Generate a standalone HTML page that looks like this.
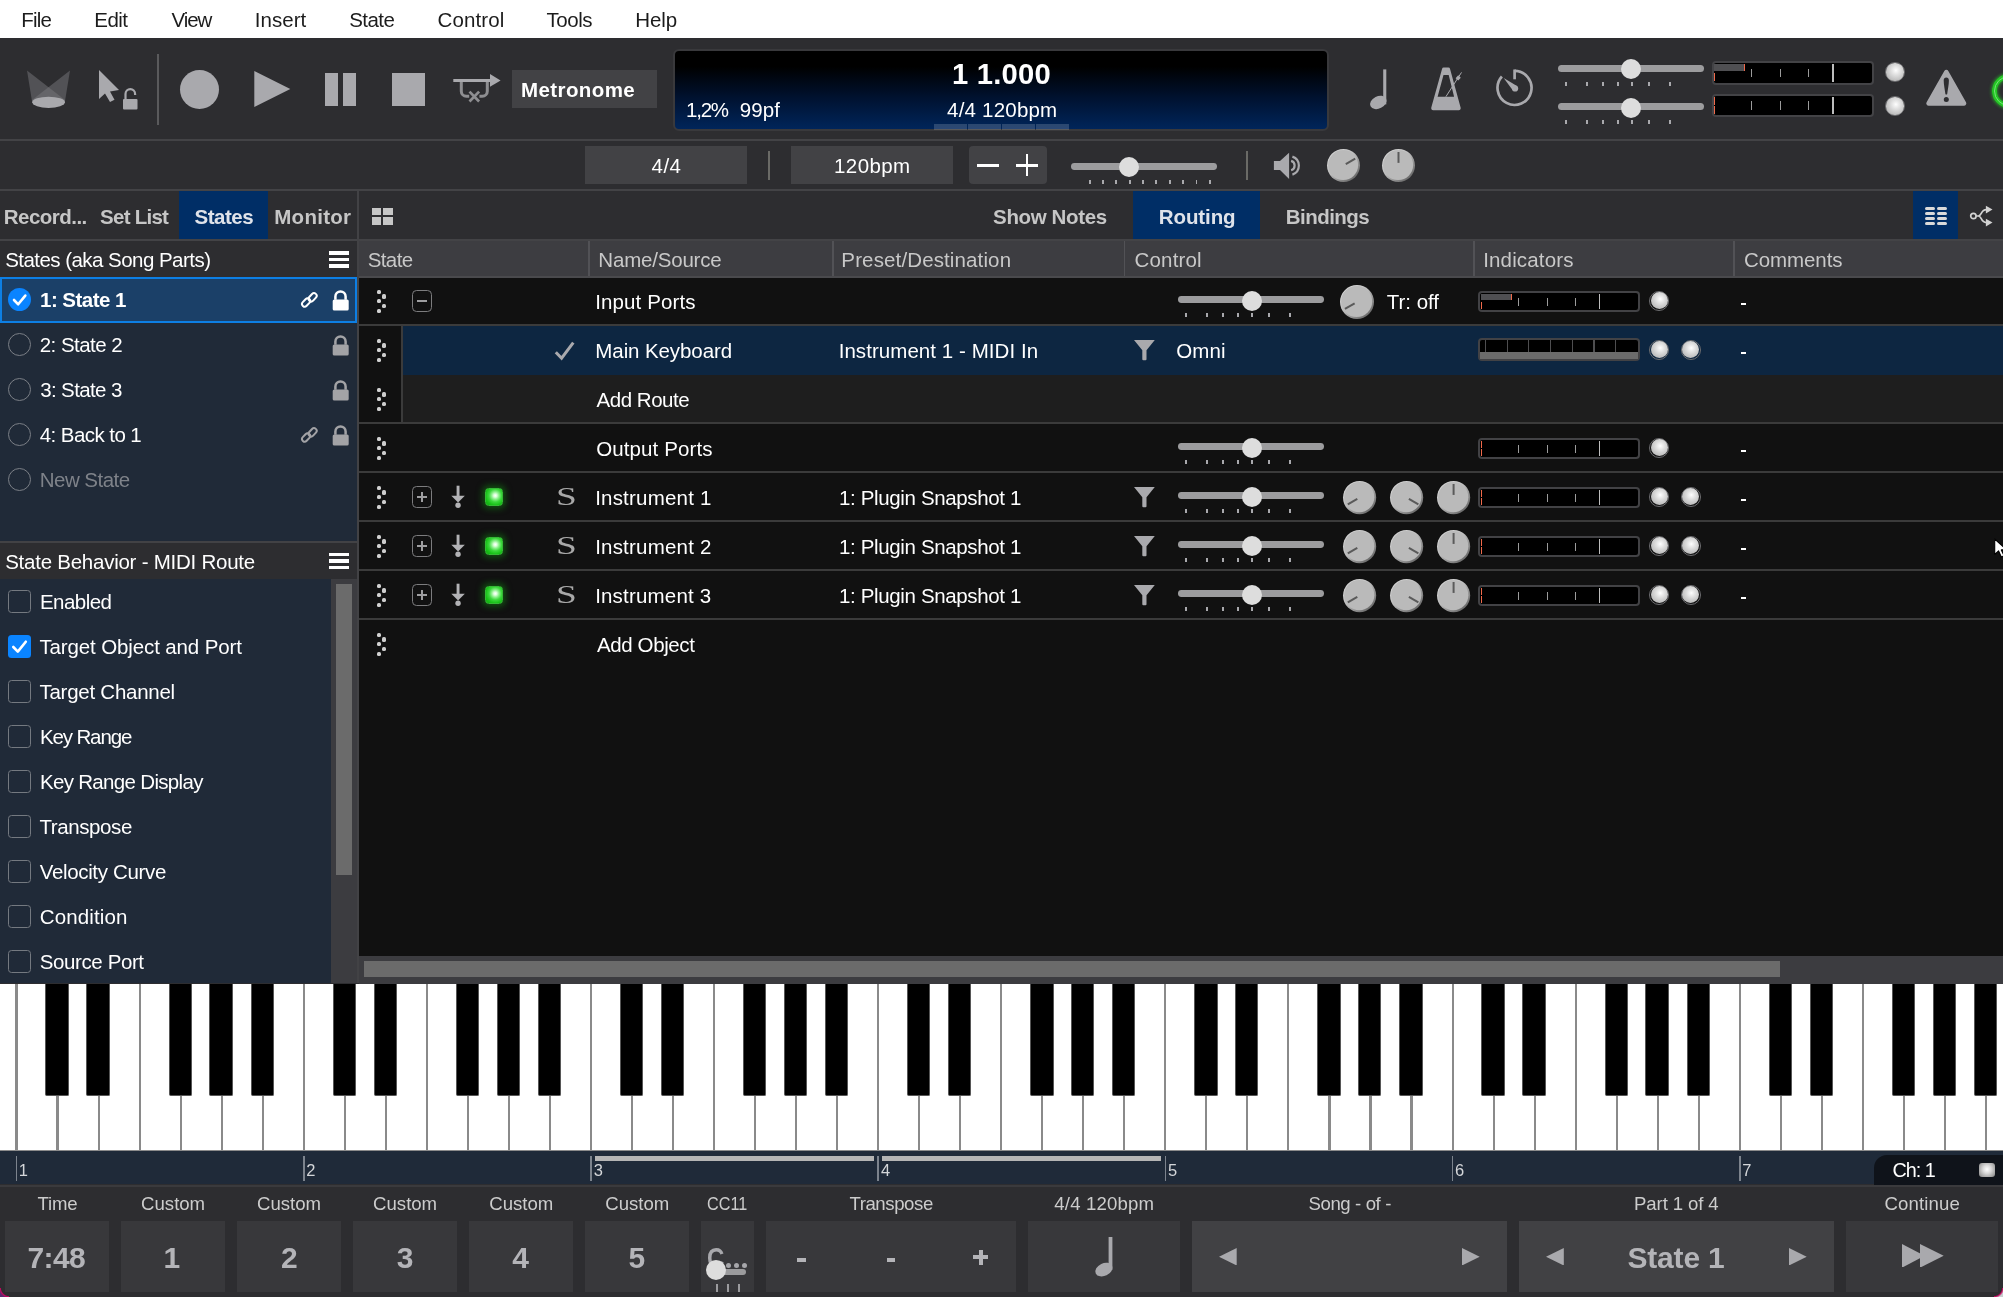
<!DOCTYPE html>
<html><head><meta charset="utf-8"><title>UI</title>
<style>
html,body{margin:0;padding:0;}
body{width:2003px;height:1297px;overflow:hidden;background:#2d2d30;position:relative;font-family:"Liberation Sans",sans-serif;}
#r{position:absolute;left:0;top:0;width:2003px;height:1297px;overflow:hidden;will-change:transform;}
#r div,#r span,#r svg{position:absolute;display:block;}
#r span{white-space:nowrap;}
</style></head><body><div id="r">
<div style="left:0px;top:0px;width:2003px;height:38px;background:#ffffff;"></div>
<span style="left:21.36px;top:9.57px;font-size:20.5px;line-height:20.5px;color:#1c1c1c;letter-spacing:-0.850px;">File</span>
<span style="left:94.36px;top:9.57px;font-size:20.5px;line-height:20.5px;color:#1c1c1c;letter-spacing:-0.610px;">Edit</span>
<span style="left:171.50px;top:9.57px;font-size:20.5px;line-height:20.5px;color:#1c1c1c;letter-spacing:-1.075px;">View</span>
<span style="left:254.66px;top:9.57px;font-size:20.5px;line-height:20.5px;color:#1c1c1c;letter-spacing:0.066px;">Insert</span>
<span style="left:349.18px;top:9.57px;font-size:20.5px;line-height:20.5px;color:#1c1c1c;letter-spacing:-0.526px;">State</span>
<span style="left:437.48px;top:9.57px;font-size:20.5px;line-height:20.5px;color:#1c1c1c;letter-spacing:0.119px;">Control</span>
<span style="left:546.59px;top:9.57px;font-size:20.5px;line-height:20.5px;color:#1c1c1c;letter-spacing:-0.483px;">Tools</span>
<span style="left:635.36px;top:9.57px;font-size:20.5px;line-height:20.5px;color:#1c1c1c;letter-spacing:-0.160px;">Help</span>
<div style="left:0px;top:38px;width:2003px;height:101px;background:#2d2d30;"></div>
<div style="left:0px;top:139px;width:2003px;height:2px;background:#434346;"></div>
<div style="left:0px;top:141px;width:2003px;height:48px;background:#2d2d30;"></div>
<div style="left:0px;top:189px;width:2003px;height:2px;background:#434346;"></div>
<div style="left:0px;top:191px;width:2003px;height:48px;background:#2d2d30;"></div>
<div style="left:0px;top:239px;width:2003px;height:2px;background:#434346;"></div>
<svg style="left:24px;top:66px;" width="50" height="46" viewBox="0 0 50 46"><polygon points="3,4.5 41,34 41,37 8.3,37" fill="#77777b" opacity="0.5"/><polygon points="46,4.5 8,34 8,37 40.7,37" fill="#77777b" opacity="0.5"/><ellipse cx="24.6" cy="36.3" rx="16.3" ry="5.6" fill="#a9a9ad"/></svg>
<svg style="left:96px;top:66px;" width="46" height="48" viewBox="0 0 46 48"><polygon points="3,4 3,33 9,27.5 14,36 18.5,33.8 14,25.5 23,24" fill="#a9a9ad"/><rect x="27" y="33" width="14.5" height="10.5" rx="1" fill="#a9a9ad"/><path d="M29.5 33 v-5 a4.8 4.8 0 0 1 9.6 0 v1" fill="none" stroke="#a9a9ad" stroke-width="2.2"/></svg>
<div style="left:157px;top:54px;width:2px;height:71px;background:#5a5a5c;"></div>
<div style="left:179.5px;top:69.5px;width:39px;height:39px;background:#a9a9ad;border-radius:50%"></div>
<svg style="left:250px;top:68px;" width="44" height="42" viewBox="0 0 44 42"><polygon points="4.3,3 40.3,21 4.3,39" fill="#a9a9ad"/></svg>
<div style="left:325px;top:73px;width:13px;height:33px;background:#a9a9ad;"></div>
<div style="left:343px;top:73px;width:13px;height:33px;background:#a9a9ad;"></div>
<div style="left:392px;top:73px;width:33px;height:33px;background:#a9a9ad;"></div>
<svg style="left:450px;top:70px;" width="54" height="36" viewBox="0 0 54 36"><path d="M11.3 11 V21.2 a5 5 0 0 0 5 5 H19.2 M37.3 11 V21.2 a5 5 0 0 1 -5 5 H29.4" stroke="#8e8e91" stroke-width="3" fill="none"/><path d="M19.5 21.6 L29.1 31.5 M29.1 21.6 L19.5 31.5" stroke="#8e8e91" stroke-width="2.7" fill="none"/><path d="M3.3 10.4 H41" stroke="#a9a9ad" stroke-width="3" fill="none"/><polygon points="40,4.1 50.6,10.4 40,16.7" fill="#a9a9ad"/></svg>
<div style="left:512px;top:70px;width:145px;height:38px;background:#424245;"></div>
<span style="left:521.07px;top:79.78px;font-size:20.5px;line-height:20.5px;color:#ffffff;font-weight:bold;letter-spacing:0.399px;">Metronome</span>
<div style="left:673px;top:48.8px;width:656px;height:82px;background:linear-gradient(#000 0%,#000 20%,#001230 60%,#00255a 100%);border:2.6px solid #39393c;border-radius:6px;box-sizing:border-box;"></div>
<span style="left:952.00px;top:60.08px;font-size:29.2px;line-height:29.2px;color:#fff;font-weight:bold;letter-spacing:0.214px;">1 1.000</span>
<span style="left:686.07px;top:99.58px;font-size:20.5px;line-height:20.5px;color:#fff;letter-spacing:-1.264px;">1,2%</span>
<span style="left:739.68px;top:99.58px;font-size:20.5px;line-height:20.5px;color:#fff;letter-spacing:0.092px;">99pf</span>
<span style="left:947.09px;top:99.58px;font-size:20.5px;line-height:20.5px;color:#fff;letter-spacing:0.203px;">4/4 120bpm</span>
<div style="left:934px;top:124px;width:33px;height:6px;background:rgba(255,255,255,0.17);"></div>
<div style="left:968px;top:124px;width:33px;height:6px;background:rgba(255,255,255,0.17);"></div>
<div style="left:1002px;top:124px;width:33px;height:6px;background:rgba(255,255,255,0.17);"></div>
<div style="left:1036px;top:124px;width:33px;height:6px;background:rgba(255,255,255,0.17);"></div>
<div style="left:585px;top:146px;width:162px;height:38px;background:#424245;"></div>
<span style="left:651.59px;top:155.88px;font-size:20.5px;line-height:20.5px;color:#fff;letter-spacing:0.424px;">4/4</span>
<div style="left:768.2px;top:151.3px;width:1.8px;height:28.5px;background:#6a6a66;"></div>
<div style="left:791px;top:146px;width:162px;height:38px;background:#424245;"></div>
<span style="left:834.07px;top:155.88px;font-size:20.5px;line-height:20.5px;color:#fff;letter-spacing:0.409px;">120bpm</span>
<div style="left:969px;top:146px;width:78px;height:38px;background:#424245;border-radius:4px"></div>
<div style="left:977px;top:163.8px;width:22px;height:2.8px;background:#fff;"></div>
<div style="left:1016px;top:163.8px;width:22px;height:2.8px;background:#fff;"></div>
<div style="left:1025.6px;top:154px;width:2.8px;height:22px;background:#fff;"></div>
<svg style="left:1366px;top:64px;" width="26" height="50" viewBox="0 0 26 50"><rect x="17.2" y="5.4" width="3.1" height="35" fill="#a9a9ad"/><ellipse cx="12.3" cy="38.4" rx="8.7" ry="6.1" transform="rotate(-27 12.3 38.4)" fill="#a9a9ad"/></svg>
<svg style="left:1426px;top:64px;" width="40" height="50" viewBox="0 0 40 50"><path d="M17.6 3.5 h4.9 a1.6 1.6 0 0 1 1.5 1.2 L34.6 43.6 a2 2 0 0 1 -1.9 2.6 H7.2 a2 2 0 0 1 -1.9 -2.6 L16.1 4.700 a1.6 1.6 0 0 1 1.5 -1.2 z M17.5 11.1 L11.6 32.700 H28.100 L22.7 11.1 z" fill="#a9a9ad" fill-rule="evenodd"/><path d="M19.9 32.7 L35.5 8.4" stroke="#a9a9ad" stroke-width="1"/><polygon points="32.200,11.3 34.8,13.7 32.200,16.6 29.6,14.2" fill="#a9a9ad"/></svg>
<svg style="left:1492px;top:66px;" width="46" height="46" viewBox="0 0 46 46"><path d="M22.6 4.9 A17 17 0 1 1 9.9 10.500" fill="none" stroke="#a9a9ad" stroke-width="2.7"/><path d="M22.6 3.5 V13.3" stroke="#a9a9ad" stroke-width="2.7"/><path d="M11.7 11.900 L25.4 20.3 L20.9 24.6 z" fill="#a9a9ad"/><circle cx="23.1" cy="22.5" r="3.1" fill="#a9a9ad"/></svg>
<div style="left:1558px;top:65.1px;width:146px;height:7px;background:#9c9c9e;border-radius:3.5px"></div>
<div style="left:1565.2px;top:82px;width:1.6px;height:4.4px;background:#a9a9ad;"></div>
<div style="left:1586.2px;top:82px;width:1.6px;height:4.4px;background:#a9a9ad;"></div>
<div style="left:1602.2px;top:82px;width:1.6px;height:4.4px;background:#a9a9ad;"></div>
<div style="left:1617.2px;top:82px;width:1.6px;height:4.4px;background:#a9a9ad;"></div>
<div style="left:1631.2px;top:82px;width:1.6px;height:4.4px;background:#a9a9ad;"></div>
<div style="left:1648.2px;top:82px;width:1.6px;height:4.4px;background:#a9a9ad;"></div>
<div style="left:1669.2px;top:82px;width:1.6px;height:4.4px;background:#a9a9ad;"></div>
<div style="left:1620.7px;top:59.04999999999999px;width:20.2px;height:20.2px;background:#dddddd;border-radius:50%"></div>
<div style="left:1558px;top:103.2px;width:146px;height:7px;background:#9c9c9e;border-radius:3.5px"></div>
<div style="left:1565.2px;top:120px;width:1.6px;height:4.4px;background:#a9a9ad;"></div>
<div style="left:1586.2px;top:120px;width:1.6px;height:4.4px;background:#a9a9ad;"></div>
<div style="left:1602.2px;top:120px;width:1.6px;height:4.4px;background:#a9a9ad;"></div>
<div style="left:1617.2px;top:120px;width:1.6px;height:4.4px;background:#a9a9ad;"></div>
<div style="left:1631.2px;top:120px;width:1.6px;height:4.4px;background:#a9a9ad;"></div>
<div style="left:1648.2px;top:120px;width:1.6px;height:4.4px;background:#a9a9ad;"></div>
<div style="left:1669.2px;top:120px;width:1.6px;height:4.4px;background:#a9a9ad;"></div>
<div style="left:1620.7px;top:97.50000000000001px;width:20.2px;height:20.2px;background:#dddddd;border-radius:50%"></div>
<div style="left:1711.7px;top:61px;width:162px;height:23.5px;background:#000;border:2px solid #434346;border-radius:4px;box-sizing:border-box;"></div>
<div style="left:1751.2px;top:68.99px;width:1.2px;height:8.459999999999999px;background:#9c9c9c;"></div>
<div style="left:1780.2px;top:68.99px;width:1.2px;height:8.459999999999999px;background:#9c9c9c;"></div>
<div style="left:1808.2px;top:68.99px;width:1.2px;height:8.459999999999999px;background:#9c9c9c;"></div>
<div style="left:1832.2px;top:64px;width:1.4px;height:17.5px;background:#bdbdbd;"></div>
<div style="left:1714.4px;top:64px;width:30px;height:7.35px;background:#4f4f52;"></div>
<div style="left:1744.0px;top:64px;width:1.1px;height:7.35px;background:#f0694a;"></div>
<div style="left:1714.4px;top:73.45px;width:1.1px;height:8.05px;background:#f0694a;"></div>
<div style="left:1711.7px;top:93.5px;width:162px;height:23.5px;background:#000;border:2px solid #434346;border-radius:4px;box-sizing:border-box;"></div>
<div style="left:1751.2px;top:101.49px;width:1.2px;height:8.459999999999999px;background:#9c9c9c;"></div>
<div style="left:1780.2px;top:101.49px;width:1.2px;height:8.459999999999999px;background:#9c9c9c;"></div>
<div style="left:1808.2px;top:101.49px;width:1.2px;height:8.459999999999999px;background:#9c9c9c;"></div>
<div style="left:1832.2px;top:96.5px;width:1.4px;height:17.5px;background:#bdbdbd;"></div>
<div style="left:1714.4px;top:96.5px;width:1.1px;height:8.05px;background:#f0694a;"></div>
<div style="left:1714.4px;top:105.95px;width:1.1px;height:8.05px;background:#f0694a;"></div>
<div style="left:1884.8px;top:61.8px;width:20.4px;height:20.4px;background:transparent;border-radius:50%;border:1.2px solid #6e6e71;box-sizing:border-box;"></div>
<div style="left:1886.45px;top:63.45px;width:17.1px;height:17.1px;background:radial-gradient(circle at 55% 41%,#ffffff 0%,#f4f4f4 10%,#dadada 38%,#c0c0c0 68%,#a6a6a6 100%);border-radius:50%;"></div>
<div style="left:1884.8px;top:95.8px;width:20.4px;height:20.4px;background:transparent;border-radius:50%;border:1.2px solid #6e6e71;box-sizing:border-box;"></div>
<div style="left:1886.45px;top:97.45px;width:17.1px;height:17.1px;background:radial-gradient(circle at 55% 41%,#ffffff 0%,#f4f4f4 10%,#dadada 38%,#c0c0c0 68%,#a6a6a6 100%);border-radius:50%;"></div>
<svg style="left:1924px;top:66px;" width="46" height="44" viewBox="0 0 46 44"><path d="M20.3 5.0 a2.3 2.3 0 0 1 4 0 L42.0 36.2 a2.4 2.4 0 0 1 -2.1 3.6 H4.7 a2.4 2.4 0 0 1 -2.1 -3.6 z" fill="#a9a9ad"/><path d="M22.3 11.4 c1.6 0 2.6 1.2 2.6 3 c0 4 -1.2 9.5 -1.7 13.6 c-0.1 0.8 -1.7 0.8 -1.8 0 c-0.5 -4.1 -1.7 -9.600 -1.7 -13.600 c0 -1.8 1 -3 2.6 -3 z" fill="#2d2d30"/><circle cx="22.3" cy="33.4" r="2.5" fill="#2d2d30"/></svg>
<div style="left:1992.3px;top:73.8px;width:34.4px;height:34.4px;background:transparent;border-radius:50%;border:5.6px solid #25c425;box-sizing:border-box;box-shadow:0 0 3px 1px rgba(40,200,40,0.6), inset 0 0 3px 1px rgba(40,200,40,0.6);"></div>
<div style="left:1994.3px;top:75.8px;width:30.4px;height:30.4px;background:transparent;border-radius:50%;border:1.6px solid #74e874;box-sizing:border-box;"></div>
<div style="left:1071px;top:162.9px;width:146px;height:6.8px;background:#9c9c9e;border-radius:3.4px"></div>
<div style="left:1089.2px;top:180px;width:1.6px;height:4px;background:#a9a9ad;"></div>
<div style="left:1102.2px;top:180px;width:1.6px;height:4px;background:#a9a9ad;"></div>
<div style="left:1115.2px;top:180px;width:1.6px;height:4px;background:#a9a9ad;"></div>
<div style="left:1129.2px;top:180px;width:1.6px;height:4px;background:#a9a9ad;"></div>
<div style="left:1142.2px;top:180px;width:1.6px;height:4px;background:#a9a9ad;"></div>
<div style="left:1155.2px;top:180px;width:1.6px;height:4px;background:#a9a9ad;"></div>
<div style="left:1169.2px;top:180px;width:1.6px;height:4px;background:#a9a9ad;"></div>
<div style="left:1182.2px;top:180px;width:1.6px;height:4px;background:#a9a9ad;"></div>
<div style="left:1195.5px;top:180px;width:1.6px;height:4px;background:#a9a9ad;"></div>
<div style="left:1209.2px;top:180px;width:1.6px;height:4px;background:#a9a9ad;"></div>
<div style="left:1119.3000000000002px;top:157.3px;width:20.2px;height:20.2px;background:#dddddd;border-radius:50%"></div>
<div style="left:1246.4px;top:151px;width:1.6px;height:28.5px;background:#6a6a66;"></div>
<svg style="left:1272px;top:151px;" width="30" height="30" viewBox="0 0 30 30"><path d="M1.9 10 H8 L17.1 1.800 V28 L8 18.9 H1.9 z" fill="#a9a9ad"/><path d="M19.1 9.9 a4.9 4.9 0 0 1 0 9.4 M20.4 5.6 a9.5 9.5 0 0 1 0 18" fill="none" stroke="#a9a9ad" stroke-width="2.2"/></svg>
<svg style="left:1325.1px;top:146.9px;" width="37.0" height="37.0" viewBox="0 0 37.0 37.0"><defs><linearGradient id="kg1" x1="0.15" y1="0.1" x2="0.85" y2="0.9"><stop offset="0" stop-color="#d8d8d8"/><stop offset="0.45" stop-color="#bcbcbc"/><stop offset="1" stop-color="#666"/></linearGradient></defs><circle cx="18.5" cy="18.5" r="16.5" fill="url(#kg1)"/><circle cx="18.15" cy="18.05" r="15.0" fill="#bababa"/><line x1="20.79" y1="17.18" x2="30.22" y2="11.73" stroke="#5a5a5a" stroke-width="2"/></svg>
<svg style="left:1380.0px;top:146.9px;" width="37.0" height="37.0" viewBox="0 0 37.0 37.0"><defs><linearGradient id="kg2" x1="0.15" y1="0.1" x2="0.85" y2="0.9"><stop offset="0" stop-color="#d8d8d8"/><stop offset="0.45" stop-color="#bcbcbc"/><stop offset="1" stop-color="#666"/></linearGradient></defs><circle cx="18.5" cy="18.5" r="16.5" fill="url(#kg2)"/><circle cx="18.15" cy="18.05" r="15.0" fill="#bababa"/><line x1="18.50" y1="15.86" x2="18.50" y2="4.97" stroke="#5a5a5a" stroke-width="2"/></svg>
<div style="left:179px;top:191px;width:89px;height:48px;background:#002e66;"></div>
<span style="left:3.77px;top:206.57px;font-size:20.5px;line-height:20.5px;color:#c6c6c6;font-weight:bold;letter-spacing:-0.524px;">Record...</span>
<span style="left:100.09px;top:206.57px;font-size:20.5px;line-height:20.5px;color:#c6c6c6;font-weight:bold;letter-spacing:-0.739px;">Set List</span>
<span style="left:194.59px;top:206.57px;font-size:20.5px;line-height:20.5px;color:#dfe3ea;font-weight:bold;letter-spacing:-0.496px;">States</span>
<span style="left:274.27px;top:206.57px;font-size:20.5px;line-height:20.5px;color:#c6c6c6;font-weight:bold;letter-spacing:0.279px;">Monitor</span>
<div style="left:357px;top:191px;width:2px;height:792px;background:#424245;"></div>
<div style="left:371.5px;top:207.5px;width:9.5px;height:7.6px;background:#c6c6c6;"></div>
<div style="left:371.5px;top:217.0px;width:9.5px;height:7.6px;background:#c6c6c6;"></div>
<div style="left:383.0px;top:207.5px;width:9.5px;height:7.6px;background:#c6c6c6;"></div>
<div style="left:383.0px;top:217.0px;width:9.5px;height:7.6px;background:#c6c6c6;"></div>
<span style="left:993.09px;top:206.57px;font-size:20.5px;line-height:20.5px;color:#c6c6c6;font-weight:bold;letter-spacing:-0.363px;">Show Notes</span>
<div style="left:1133px;top:191px;width:127px;height:48px;background:#002e66;"></div>
<span style="left:1158.77px;top:206.57px;font-size:20.5px;line-height:20.5px;color:#dfe3ea;font-weight:bold;letter-spacing:-0.090px;">Routing</span>
<span style="left:1285.77px;top:206.57px;font-size:20.5px;line-height:20.5px;color:#c6c6c6;font-weight:bold;letter-spacing:-0.545px;">Bindings</span>
<div style="left:1913px;top:191px;width:45px;height:48px;background:#002e66;"></div>
<div style="left:1925.2px;top:207.0px;width:10.1px;height:3.2px;background:#dadada;border-radius:1.6px"></div>
<div style="left:1936.6000000000001px;top:207.0px;width:10.1px;height:3.2px;background:#dadada;border-radius:1.6px"></div>
<div style="left:1925.2px;top:211.93px;width:10.1px;height:3.2px;background:#dadada;border-radius:1.6px"></div>
<div style="left:1936.6000000000001px;top:211.93px;width:10.1px;height:3.2px;background:#dadada;border-radius:1.6px"></div>
<div style="left:1925.2px;top:216.86px;width:10.1px;height:3.2px;background:#dadada;border-radius:1.6px"></div>
<div style="left:1936.6000000000001px;top:216.86px;width:10.1px;height:3.2px;background:#dadada;border-radius:1.6px"></div>
<div style="left:1925.2px;top:221.79px;width:10.1px;height:3.2px;background:#dadada;border-radius:1.6px"></div>
<div style="left:1936.6000000000001px;top:221.79px;width:10.1px;height:3.2px;background:#dadada;border-radius:1.6px"></div>
<svg style="left:1966px;top:202px;" width="32" height="30" viewBox="0 0 32 30"><circle cx="7.4" cy="14" r="2.7" fill="none" stroke="#d2d2d2" stroke-width="1.7"/><path d="M10.2 14 H13 M12.3 14 C 16 14, 14.5 7.6, 20.5 7.6 M12.3 14 C 16 14, 14.5 20.6, 20.5 20.6" fill="none" stroke="#d2d2d2" stroke-width="1.7"/><polygon points="19.9,3.7 26.5,7.6 19.9,11.5" fill="#d2d2d2"/><polygon points="19.9,16.7 26.5,20.6 19.9,24.5" fill="#d2d2d2"/></svg>
<div style="left:0px;top:241px;width:357px;height:36px;background:#2d2d30;"></div>
<span style="left:5.18px;top:249.57px;font-size:20.5px;line-height:20.5px;color:#fff;letter-spacing:-0.538px;">States (aka Song Parts)</span>
<div style="left:328.7px;top:251.0px;width:20.5px;height:3.5px;background:#fff;"></div>
<div style="left:328.7px;top:257.6px;width:20.5px;height:3.5px;background:#fff;"></div>
<div style="left:328.7px;top:264.2px;width:20.5px;height:3.5px;background:#fff;"></div>
<div style="left:0px;top:277px;width:357px;height:264px;background:#202a38;"></div>
<div style="left:0px;top:277px;width:357px;height:46px;background:#1b4068;border:2px solid #0d7fe4;box-sizing:border-box;"></div>
<div style="left:8px;top:288.0px;width:23px;height:23px;background:#0a84ff;border-radius:50%"></div>
<svg style="left:8px;top:288.0px;" width="23" height="23" viewBox="0 0 23 23"><path d="M6 12 l4.2 4.3 L17.3 7.6" fill="none" stroke="#fff" stroke-width="2.6" stroke-linecap="round" stroke-linejoin="round"/></svg>
<span style="left:40.07px;top:289.97px;font-size:20.5px;line-height:20.5px;color:#fff;font-weight:bold;letter-spacing:-0.543px;">1: State 1</span>
<svg style="left:300px;top:290.0px;" width="19" height="19" viewBox="0 0 19 19"><g fill="none" stroke="#fff" stroke-width="2"><rect x="-4.7" y="-2.65" width="9.4" height="5.3" rx="2.65" transform="translate(6.1 12.5) rotate(-47)"/><rect x="-4.7" y="-2.65" width="9.4" height="5.3" rx="2.65" transform="translate(12.6 7.3) rotate(-47)"/></g></svg>
<svg style="left:331.9px;top:289.6px;" width="17" height="22" viewBox="0 0 17 22"><rect x="0.7" y="9.5" width="16" height="11" rx="1.6" fill="#fff"/><path d="M3.4 9.8 V6.6 a5.1 5.1 0 0 1 10.2 0 V9.8" fill="none" stroke="#fff" stroke-width="2.5"/></svg>
<div style="left:8px;top:333.0px;width:23px;height:23px;background:transparent;border-radius:50%;border:1.8px solid #7b7f86;box-sizing:border-box;"></div>
<span style="left:39.77px;top:334.97px;font-size:20.5px;line-height:20.5px;color:#fff;letter-spacing:-0.554px;">2: State 2</span>
<svg style="left:331.9px;top:334.6px;" width="17" height="22" viewBox="0 0 17 22"><rect x="0.7" y="9.5" width="16" height="11" rx="1.6" fill="#a3a3a6"/><path d="M3.4 9.8 V6.6 a5.1 5.1 0 0 1 10.2 0 V9.8" fill="none" stroke="#a3a3a6" stroke-width="2.5"/></svg>
<div style="left:8px;top:378.0px;width:23px;height:23px;background:transparent;border-radius:50%;border:1.8px solid #7b7f86;box-sizing:border-box;"></div>
<span style="left:40.18px;top:379.97px;font-size:20.5px;line-height:20.5px;color:#fff;letter-spacing:-0.622px;">3: State 3</span>
<svg style="left:331.9px;top:379.6px;" width="17" height="22" viewBox="0 0 17 22"><rect x="0.7" y="9.5" width="16" height="11" rx="1.6" fill="#a3a3a6"/><path d="M3.4 9.8 V6.6 a5.1 5.1 0 0 1 10.2 0 V9.8" fill="none" stroke="#a3a3a6" stroke-width="2.5"/></svg>
<div style="left:8px;top:423.0px;width:23px;height:23px;background:transparent;border-radius:50%;border:1.8px solid #7b7f86;box-sizing:border-box;"></div>
<span style="left:39.79px;top:424.97px;font-size:20.5px;line-height:20.5px;color:#fff;letter-spacing:-0.573px;">4: Back to 1</span>
<svg style="left:300px;top:425.0px;" width="19" height="19" viewBox="0 0 19 19"><g fill="none" stroke="#a3a3a6" stroke-width="2"><rect x="-4.7" y="-2.65" width="9.4" height="5.3" rx="2.65" transform="translate(6.1 12.5) rotate(-47)"/><rect x="-4.7" y="-2.65" width="9.4" height="5.3" rx="2.65" transform="translate(12.6 7.3) rotate(-47)"/></g></svg>
<svg style="left:331.9px;top:424.6px;" width="17" height="22" viewBox="0 0 17 22"><rect x="0.7" y="9.5" width="16" height="11" rx="1.6" fill="#a3a3a6"/><path d="M3.4 9.8 V6.6 a5.1 5.1 0 0 1 10.2 0 V9.8" fill="none" stroke="#a3a3a6" stroke-width="2.5"/></svg>
<div style="left:8px;top:468.0px;width:23px;height:23px;background:transparent;border-radius:50%;border:1.8px solid #7b7f86;box-sizing:border-box;"></div>
<span style="left:39.76px;top:469.97px;font-size:20.5px;line-height:20.5px;color:#7e8289;letter-spacing:-0.524px;">New State</span>
<div style="left:0px;top:541px;width:357px;height:2px;background:#424245;"></div>
<div style="left:0px;top:543px;width:357px;height:36px;background:#2d2d30;"></div>
<span style="left:5.18px;top:551.68px;font-size:20.5px;line-height:20.5px;color:#fff;letter-spacing:-0.246px;">State Behavior - MIDI Route</span>
<div style="left:328.7px;top:552.5px;width:20.5px;height:3.5px;background:#fff;"></div>
<div style="left:328.7px;top:559.1px;width:20.5px;height:3.5px;background:#fff;"></div>
<div style="left:328.7px;top:565.7px;width:20.5px;height:3.5px;background:#fff;"></div>
<div style="left:0px;top:579px;width:331px;height:404px;background:#202a38;"></div>
<div style="left:331px;top:579px;width:26px;height:404px;background:#3c3c40;"></div>
<div style="left:336px;top:584px;width:16px;height:291px;background:#6b6b6b;"></div>
<div style="left:8px;top:590.0px;width:23px;height:23px;background:transparent;border-radius:3.5px;border:1.8px solid #747980;box-sizing:border-box;"></div>
<span style="left:39.96px;top:592.18px;font-size:20.5px;line-height:20.5px;color:#fff;letter-spacing:-0.540px;">Enabled</span>
<div style="left:8px;top:635.0px;width:23px;height:23px;background:#0a84ff;border-radius:3.5px"></div>
<svg style="left:8px;top:635.0px;" width="23" height="23" viewBox="0 0 23 23"><path d="M5.3 12 l4.5 4.6 L17.8 6.7" fill="none" stroke="#fff" stroke-width="2.6" stroke-linecap="round" stroke-linejoin="round"/></svg>
<span style="left:39.49px;top:637.18px;font-size:20.5px;line-height:20.5px;color:#fff;letter-spacing:-0.131px;">Target Object and Port</span>
<div style="left:8px;top:680.0px;width:23px;height:23px;background:transparent;border-radius:3.5px;border:1.8px solid #747980;box-sizing:border-box;"></div>
<span style="left:39.49px;top:682.18px;font-size:20.5px;line-height:20.5px;color:#fff;letter-spacing:-0.258px;">Target Channel</span>
<div style="left:8px;top:725.0px;width:23px;height:23px;background:transparent;border-radius:3.5px;border:1.8px solid #747980;box-sizing:border-box;"></div>
<span style="left:39.96px;top:727.18px;font-size:20.5px;line-height:20.5px;color:#fff;letter-spacing:-1.131px;">Key Range</span>
<div style="left:8px;top:770.0px;width:23px;height:23px;background:transparent;border-radius:3.5px;border:1.8px solid #747980;box-sizing:border-box;"></div>
<span style="left:39.96px;top:772.18px;font-size:20.5px;line-height:20.5px;color:#fff;letter-spacing:-0.681px;">Key Range Display</span>
<div style="left:8px;top:815.0px;width:23px;height:23px;background:transparent;border-radius:3.5px;border:1.8px solid #747980;box-sizing:border-box;"></div>
<span style="left:39.49px;top:817.18px;font-size:20.5px;line-height:20.5px;color:#fff;letter-spacing:-0.405px;">Transpose</span>
<div style="left:8px;top:860.0px;width:23px;height:23px;background:transparent;border-radius:3.5px;border:1.8px solid #747980;box-sizing:border-box;"></div>
<span style="left:39.70px;top:862.18px;font-size:20.5px;line-height:20.5px;color:#fff;letter-spacing:-0.337px;">Velocity Curve</span>
<div style="left:8px;top:905.0px;width:23px;height:23px;background:transparent;border-radius:3.5px;border:1.8px solid #747980;box-sizing:border-box;"></div>
<span style="left:39.77px;top:907.18px;font-size:20.5px;line-height:20.5px;color:#fff;letter-spacing:0.133px;">Condition</span>
<div style="left:8px;top:950.0px;width:23px;height:23px;background:transparent;border-radius:3.5px;border:1.8px solid #747980;box-sizing:border-box;"></div>
<span style="left:39.78px;top:952.18px;font-size:20.5px;line-height:20.5px;color:#fff;letter-spacing:-0.397px;">Source Port</span>
<div style="left:359px;top:241px;width:1644px;height:35px;background:#3d3d41;"></div>
<div style="left:359px;top:276px;width:1644px;height:2px;background:#4a4a4d;"></div>
<div style="left:588px;top:241px;width:1.7px;height:35px;background:#525256;"></div>
<div style="left:832px;top:241px;width:1.7px;height:35px;background:#525256;"></div>
<div style="left:1123.8px;top:241px;width:1.7px;height:35px;background:#525256;"></div>
<div style="left:1473.2px;top:241px;width:1.7px;height:35px;background:#525256;"></div>
<div style="left:1733.4px;top:241px;width:1.7px;height:35px;background:#525256;"></div>
<span style="left:367.68px;top:249.57px;font-size:20.5px;line-height:20.5px;color:#c8c8c8;letter-spacing:-0.601px;">State</span>
<span style="left:598.36px;top:249.57px;font-size:20.5px;line-height:20.5px;color:#c8c8c8;letter-spacing:-0.205px;">Name/Source</span>
<span style="left:841.36px;top:249.57px;font-size:20.5px;line-height:20.5px;color:#c8c8c8;letter-spacing:0.129px;">Preset/Destination</span>
<span style="left:1134.47px;top:249.57px;font-size:20.5px;line-height:20.5px;color:#c8c8c8;letter-spacing:0.186px;">Control</span>
<span style="left:1483.15px;top:249.57px;font-size:20.5px;line-height:20.5px;color:#c8c8c8;letter-spacing:0.165px;">Indicators</span>
<span style="left:1743.97px;top:249.57px;font-size:20.5px;line-height:20.5px;color:#c8c8c8;letter-spacing:-0.081px;">Comments</span>
<div style="left:359px;top:278px;width:1644px;height:678px;background:#111111;"></div>
<div style="left:359px;top:324px;width:1644px;height:2px;background:#3b3b3b;"></div>
<div style="left:359px;top:422px;width:1644px;height:2px;background:#3b3b3b;"></div>
<div style="left:359px;top:471px;width:1644px;height:2px;background:#3b3b3b;"></div>
<div style="left:359px;top:520px;width:1644px;height:2px;background:#3b3b3b;"></div>
<div style="left:359px;top:569px;width:1644px;height:2px;background:#3b3b3b;"></div>
<div style="left:359px;top:618px;width:1644px;height:2px;background:#3b3b3b;"></div>
<div style="left:401px;top:326px;width:2px;height:96px;background:#3b3b3b;"></div>
<div style="left:403px;top:326px;width:1600px;height:49px;background:#0d2641;"></div>
<div style="left:403px;top:375px;width:1600px;height:47px;background:#1e1e1e;"></div>
<div style="left:377.09999999999997px;top:289.59999999999997px;width:4.2px;height:4.2px;background:#d2d2d2;border-radius:38%"></div>
<div style="left:382.09999999999997px;top:294.4px;width:4.2px;height:4.2px;background:#cdcdcd;border-radius:38%"></div>
<div style="left:377.09999999999997px;top:299.2px;width:4.2px;height:4.2px;background:#d2d2d2;border-radius:38%"></div>
<div style="left:382.09999999999997px;top:303.99999999999994px;width:4.2px;height:4.2px;background:#cdcdcd;border-radius:38%"></div>
<div style="left:377.09999999999997px;top:308.79999999999995px;width:4.2px;height:4.2px;background:#d2d2d2;border-radius:38%"></div>
<div style="left:377.09999999999997px;top:338.59999999999997px;width:4.2px;height:4.2px;background:#d2d2d2;border-radius:38%"></div>
<div style="left:382.09999999999997px;top:343.4px;width:4.2px;height:4.2px;background:#cdcdcd;border-radius:38%"></div>
<div style="left:377.09999999999997px;top:348.2px;width:4.2px;height:4.2px;background:#d2d2d2;border-radius:38%"></div>
<div style="left:382.09999999999997px;top:352.99999999999994px;width:4.2px;height:4.2px;background:#cdcdcd;border-radius:38%"></div>
<div style="left:377.09999999999997px;top:357.79999999999995px;width:4.2px;height:4.2px;background:#d2d2d2;border-radius:38%"></div>
<div style="left:377.09999999999997px;top:387.59999999999997px;width:4.2px;height:4.2px;background:#d2d2d2;border-radius:38%"></div>
<div style="left:382.09999999999997px;top:392.4px;width:4.2px;height:4.2px;background:#cdcdcd;border-radius:38%"></div>
<div style="left:377.09999999999997px;top:397.2px;width:4.2px;height:4.2px;background:#d2d2d2;border-radius:38%"></div>
<div style="left:382.09999999999997px;top:401.99999999999994px;width:4.2px;height:4.2px;background:#cdcdcd;border-radius:38%"></div>
<div style="left:377.09999999999997px;top:406.79999999999995px;width:4.2px;height:4.2px;background:#d2d2d2;border-radius:38%"></div>
<div style="left:377.09999999999997px;top:436.59999999999997px;width:4.2px;height:4.2px;background:#d2d2d2;border-radius:38%"></div>
<div style="left:382.09999999999997px;top:441.4px;width:4.2px;height:4.2px;background:#cdcdcd;border-radius:38%"></div>
<div style="left:377.09999999999997px;top:446.2px;width:4.2px;height:4.2px;background:#d2d2d2;border-radius:38%"></div>
<div style="left:382.09999999999997px;top:450.99999999999994px;width:4.2px;height:4.2px;background:#cdcdcd;border-radius:38%"></div>
<div style="left:377.09999999999997px;top:455.79999999999995px;width:4.2px;height:4.2px;background:#d2d2d2;border-radius:38%"></div>
<div style="left:377.09999999999997px;top:485.59999999999997px;width:4.2px;height:4.2px;background:#d2d2d2;border-radius:38%"></div>
<div style="left:382.09999999999997px;top:490.4px;width:4.2px;height:4.2px;background:#cdcdcd;border-radius:38%"></div>
<div style="left:377.09999999999997px;top:495.2px;width:4.2px;height:4.2px;background:#d2d2d2;border-radius:38%"></div>
<div style="left:382.09999999999997px;top:499.99999999999994px;width:4.2px;height:4.2px;background:#cdcdcd;border-radius:38%"></div>
<div style="left:377.09999999999997px;top:504.79999999999995px;width:4.2px;height:4.2px;background:#d2d2d2;border-radius:38%"></div>
<div style="left:377.09999999999997px;top:534.6px;width:4.2px;height:4.2px;background:#d2d2d2;border-radius:38%"></div>
<div style="left:382.09999999999997px;top:539.4px;width:4.2px;height:4.2px;background:#cdcdcd;border-radius:38%"></div>
<div style="left:377.09999999999997px;top:544.2px;width:4.2px;height:4.2px;background:#d2d2d2;border-radius:38%"></div>
<div style="left:382.09999999999997px;top:549.0px;width:4.2px;height:4.2px;background:#cdcdcd;border-radius:38%"></div>
<div style="left:377.09999999999997px;top:553.8000000000001px;width:4.2px;height:4.2px;background:#d2d2d2;border-radius:38%"></div>
<div style="left:377.09999999999997px;top:583.6px;width:4.2px;height:4.2px;background:#d2d2d2;border-radius:38%"></div>
<div style="left:382.09999999999997px;top:588.4px;width:4.2px;height:4.2px;background:#cdcdcd;border-radius:38%"></div>
<div style="left:377.09999999999997px;top:593.2px;width:4.2px;height:4.2px;background:#d2d2d2;border-radius:38%"></div>
<div style="left:382.09999999999997px;top:598.0px;width:4.2px;height:4.2px;background:#cdcdcd;border-radius:38%"></div>
<div style="left:377.09999999999997px;top:602.8000000000001px;width:4.2px;height:4.2px;background:#d2d2d2;border-radius:38%"></div>
<div style="left:377.09999999999997px;top:632.6px;width:4.2px;height:4.2px;background:#d2d2d2;border-radius:38%"></div>
<div style="left:382.09999999999997px;top:637.4px;width:4.2px;height:4.2px;background:#cdcdcd;border-radius:38%"></div>
<div style="left:377.09999999999997px;top:642.2px;width:4.2px;height:4.2px;background:#d2d2d2;border-radius:38%"></div>
<div style="left:382.09999999999997px;top:647.0px;width:4.2px;height:4.2px;background:#cdcdcd;border-radius:38%"></div>
<div style="left:377.09999999999997px;top:651.8000000000001px;width:4.2px;height:4.2px;background:#d2d2d2;border-radius:38%"></div>
<div style="left:412px;top:290px;width:20px;height:22px;background:transparent;border:1.3px solid #7c7c7e;border-radius:4.5px;box-sizing:border-box;"></div>
<div style="left:417.2px;top:300.15px;width:9.7px;height:1.7px;background:#9e9ea0;"></div>
<span style="left:595.15px;top:291.57px;font-size:20.5px;line-height:20.5px;color:#fff;letter-spacing:0.122px;">Input Ports</span>
<svg style="left:553px;top:340px;" width="24" height="22" viewBox="0 0 24 22"><path d="M2.8 12.2 L8.6 18.2 L20.3 2.6" fill="none" stroke="#a9a9ad" stroke-width="3"/></svg>
<span style="left:595.36px;top:340.57px;font-size:20.5px;line-height:20.5px;color:#fff;letter-spacing:-0.099px;">Main Keyboard</span>
<span style="left:838.65px;top:340.57px;font-size:20.5px;line-height:20.5px;color:#fff;letter-spacing:0.056px;">Instrument 1 - MIDI In</span>
<span style="left:596.50px;top:389.57px;font-size:20.5px;line-height:20.5px;color:#fff;letter-spacing:-0.467px;">Add Route</span>
<span style="left:596.18px;top:438.57px;font-size:20.5px;line-height:20.5px;color:#fff;letter-spacing:0.114px;">Output Ports</span>
<svg style="left:1133.5px;top:339.5px;" width="21" height="21" viewBox="0 0 21 21"><path d="M0 0 H20.8 L12.5 10.2 V19.2 a1 1 0 0 1 -1 1 H9.3 a1 1 0 0 1 -1 -1 V10.2 z" fill="#a9a9ad"/></svg>
<span style="left:1176.18px;top:340.57px;font-size:20.5px;line-height:20.5px;color:#fff;letter-spacing:0.172px;">Omni</span>
<div style="left:1178px;top:296.3px;width:146px;height:6.8px;background:#9c9c9e;border-radius:3.4px"></div>
<div style="left:1185.2px;top:313px;width:1.6px;height:4px;background:#a9a9ad;"></div>
<div style="left:1206.2px;top:313px;width:1.6px;height:4px;background:#a9a9ad;"></div>
<div style="left:1222.2px;top:313px;width:1.6px;height:4px;background:#a9a9ad;"></div>
<div style="left:1237.2px;top:313px;width:1.6px;height:4px;background:#a9a9ad;"></div>
<div style="left:1251.2px;top:313px;width:1.6px;height:4px;background:#a9a9ad;"></div>
<div style="left:1268.2px;top:313px;width:1.6px;height:4px;background:#a9a9ad;"></div>
<div style="left:1289.2px;top:313px;width:1.6px;height:4px;background:#a9a9ad;"></div>
<div style="left:1241.65px;top:290.7px;width:20.2px;height:20.2px;background:#dddddd;border-radius:50%"></div>
<div style="left:1178px;top:443.3px;width:146px;height:6.8px;background:#9c9c9e;border-radius:3.4px"></div>
<div style="left:1185.2px;top:460px;width:1.6px;height:4px;background:#a9a9ad;"></div>
<div style="left:1206.2px;top:460px;width:1.6px;height:4px;background:#a9a9ad;"></div>
<div style="left:1222.2px;top:460px;width:1.6px;height:4px;background:#a9a9ad;"></div>
<div style="left:1237.2px;top:460px;width:1.6px;height:4px;background:#a9a9ad;"></div>
<div style="left:1251.2px;top:460px;width:1.6px;height:4px;background:#a9a9ad;"></div>
<div style="left:1268.2px;top:460px;width:1.6px;height:4px;background:#a9a9ad;"></div>
<div style="left:1289.2px;top:460px;width:1.6px;height:4px;background:#a9a9ad;"></div>
<div style="left:1241.65px;top:437.7px;width:20.2px;height:20.2px;background:#dddddd;border-radius:50%"></div>
<svg style="left:1337.6px;top:282.5px;" width="38" height="38" viewBox="0 0 38 38"><defs><linearGradient id="kg3" x1="0.15" y1="0.1" x2="0.85" y2="0.9"><stop offset="0" stop-color="#d8d8d8"/><stop offset="0.45" stop-color="#bcbcbc"/><stop offset="1" stop-color="#666"/></linearGradient></defs><circle cx="19" cy="19" r="17" fill="url(#kg3)"/><circle cx="18.65" cy="18.55" r="15.5" fill="#bababa"/><line x1="16.64" y1="20.36" x2="6.93" y2="25.97" stroke="#5a5a5a" stroke-width="2"/></svg>
<span style="left:1386.79px;top:291.57px;font-size:20.5px;line-height:20.5px;color:#fff;letter-spacing:-0.023px;">Tr: off</span>
<div style="left:412px;top:486px;width:20px;height:22px;background:transparent;border:1.3px solid #7c7c7e;border-radius:4.5px;box-sizing:border-box;"></div>
<div style="left:417.2px;top:496.15px;width:9.7px;height:1.7px;background:#9e9ea0;"></div>
<div style="left:421.15px;top:491.8px;width:1.7px;height:10.4px;background:#9e9ea0;"></div>
<svg style="left:448.8px;top:485.2px;" width="18" height="26" viewBox="0 0 18 26"><rect x="7.6" y="0.7" width="2.9" height="12" fill="#b2b2b5"/><polygon points="2.300,10.700 15.800,10.700 9.050,17.400" fill="#b2b2b5"/><circle cx="9.05" cy="20.2" r="2.700" fill="#b2b2b5"/></svg>
<div style="left:484.9px;top:487.9px;width:18.2px;height:18.2px;background:radial-gradient(circle at 58% 41%,#ffffff 0%,#dcffdc 12%,#8cf08c 28%,#3bd83b 48%,#18c018 72%,#10aa10 100%);border-radius:3.5px;border:1px solid #35b835;box-sizing:border-box;box-shadow:0 0 6px 2.5px rgba(18,150,18,0.5);"></div>
<span style="left:555.60px;top:484.40px;font-size:26px;line-height:26px;color:#a8a8a8;font-family:'Liberation Serif',serif;transform:scaleX(1.44);transform-origin:0 0;">S</span>
<span style="left:595.15px;top:487.57px;font-size:20.5px;line-height:20.5px;color:#fff;letter-spacing:0.205px;">Instrument 1</span>
<span style="left:839.07px;top:487.57px;font-size:20.5px;line-height:20.5px;color:#fff;letter-spacing:-0.364px;">1: Plugin Snapshot 1</span>
<svg style="left:1133.5px;top:486.5px;" width="21" height="21" viewBox="0 0 21 21"><path d="M0 0 H20.8 L12.5 10.2 V19.2 a1 1 0 0 1 -1 1 H9.3 a1 1 0 0 1 -1 -1 V10.2 z" fill="#a9a9ad"/></svg>
<div style="left:1178px;top:492.3px;width:146px;height:6.8px;background:#9c9c9e;border-radius:3.4px"></div>
<div style="left:1185.2px;top:509px;width:1.6px;height:4px;background:#a9a9ad;"></div>
<div style="left:1206.2px;top:509px;width:1.6px;height:4px;background:#a9a9ad;"></div>
<div style="left:1222.2px;top:509px;width:1.6px;height:4px;background:#a9a9ad;"></div>
<div style="left:1237.2px;top:509px;width:1.6px;height:4px;background:#a9a9ad;"></div>
<div style="left:1251.2px;top:509px;width:1.6px;height:4px;background:#a9a9ad;"></div>
<div style="left:1268.2px;top:509px;width:1.6px;height:4px;background:#a9a9ad;"></div>
<div style="left:1289.2px;top:509px;width:1.6px;height:4px;background:#a9a9ad;"></div>
<div style="left:1241.65px;top:486.7px;width:20.2px;height:20.2px;background:#dddddd;border-radius:50%"></div>
<svg style="left:1341.0px;top:478.7px;" width="37.2" height="37.2" viewBox="0 0 37.2 37.2"><defs><linearGradient id="kg4" x1="0.15" y1="0.1" x2="0.85" y2="0.9"><stop offset="0" stop-color="#d8d8d8"/><stop offset="0.45" stop-color="#bcbcbc"/><stop offset="1" stop-color="#666"/></linearGradient></defs><circle cx="18.6" cy="18.6" r="16.6" fill="url(#kg4)"/><circle cx="18.25" cy="18.150000000000002" r="15.100000000000001" fill="#bababa"/><line x1="16.30" y1="19.93" x2="6.81" y2="25.41" stroke="#5a5a5a" stroke-width="2"/></svg>
<svg style="left:1388.0px;top:478.7px;" width="37.2" height="37.2" viewBox="0 0 37.2 37.2"><defs><linearGradient id="kg5" x1="0.15" y1="0.1" x2="0.85" y2="0.9"><stop offset="0" stop-color="#d8d8d8"/><stop offset="0.45" stop-color="#bcbcbc"/><stop offset="1" stop-color="#666"/></linearGradient></defs><circle cx="18.6" cy="18.6" r="16.6" fill="url(#kg5)"/><circle cx="18.25" cy="18.150000000000002" r="15.100000000000001" fill="#bababa"/><line x1="20.90" y1="19.93" x2="30.39" y2="25.41" stroke="#5a5a5a" stroke-width="2"/></svg>
<svg style="left:1434.9px;top:478.7px;" width="37.2" height="37.2" viewBox="0 0 37.2 37.2"><defs><linearGradient id="kg6" x1="0.15" y1="0.1" x2="0.85" y2="0.9"><stop offset="0" stop-color="#d8d8d8"/><stop offset="0.45" stop-color="#bcbcbc"/><stop offset="1" stop-color="#666"/></linearGradient></defs><circle cx="18.6" cy="18.6" r="16.6" fill="url(#kg6)"/><circle cx="18.25" cy="18.150000000000002" r="15.100000000000001" fill="#bababa"/><line x1="18.60" y1="15.94" x2="18.60" y2="4.99" stroke="#5a5a5a" stroke-width="2"/></svg>
<div style="left:412px;top:535px;width:20px;height:22px;background:transparent;border:1.3px solid #7c7c7e;border-radius:4.5px;box-sizing:border-box;"></div>
<div style="left:417.2px;top:545.15px;width:9.7px;height:1.7px;background:#9e9ea0;"></div>
<div style="left:421.15px;top:540.8px;width:1.7px;height:10.4px;background:#9e9ea0;"></div>
<svg style="left:448.8px;top:534.1999999999999px;" width="18" height="26" viewBox="0 0 18 26"><rect x="7.6" y="0.7" width="2.9" height="12" fill="#b2b2b5"/><polygon points="2.300,10.700 15.800,10.700 9.050,17.400" fill="#b2b2b5"/><circle cx="9.05" cy="20.2" r="2.700" fill="#b2b2b5"/></svg>
<div style="left:484.9px;top:536.9px;width:18.2px;height:18.2px;background:radial-gradient(circle at 58% 41%,#ffffff 0%,#dcffdc 12%,#8cf08c 28%,#3bd83b 48%,#18c018 72%,#10aa10 100%);border-radius:3.5px;border:1px solid #35b835;box-sizing:border-box;box-shadow:0 0 6px 2.5px rgba(18,150,18,0.5);"></div>
<span style="left:555.60px;top:533.40px;font-size:26px;line-height:26px;color:#a8a8a8;font-family:'Liberation Serif',serif;transform:scaleX(1.44);transform-origin:0 0;">S</span>
<span style="left:595.15px;top:536.58px;font-size:20.5px;line-height:20.5px;color:#fff;letter-spacing:0.205px;">Instrument 2</span>
<span style="left:839.07px;top:536.58px;font-size:20.5px;line-height:20.5px;color:#fff;letter-spacing:-0.364px;">1: Plugin Snapshot 1</span>
<svg style="left:1133.5px;top:535.5px;" width="21" height="21" viewBox="0 0 21 21"><path d="M0 0 H20.8 L12.5 10.2 V19.2 a1 1 0 0 1 -1 1 H9.3 a1 1 0 0 1 -1 -1 V10.2 z" fill="#a9a9ad"/></svg>
<div style="left:1178px;top:541.3000000000001px;width:146px;height:6.8px;background:#9c9c9e;border-radius:3.4px"></div>
<div style="left:1185.2px;top:558px;width:1.6px;height:4px;background:#a9a9ad;"></div>
<div style="left:1206.2px;top:558px;width:1.6px;height:4px;background:#a9a9ad;"></div>
<div style="left:1222.2px;top:558px;width:1.6px;height:4px;background:#a9a9ad;"></div>
<div style="left:1237.2px;top:558px;width:1.6px;height:4px;background:#a9a9ad;"></div>
<div style="left:1251.2px;top:558px;width:1.6px;height:4px;background:#a9a9ad;"></div>
<div style="left:1268.2px;top:558px;width:1.6px;height:4px;background:#a9a9ad;"></div>
<div style="left:1289.2px;top:558px;width:1.6px;height:4px;background:#a9a9ad;"></div>
<div style="left:1241.65px;top:535.7px;width:20.2px;height:20.2px;background:#dddddd;border-radius:50%"></div>
<svg style="left:1341.0px;top:527.6999999999999px;" width="37.2" height="37.2" viewBox="0 0 37.2 37.2"><defs><linearGradient id="kg7" x1="0.15" y1="0.1" x2="0.85" y2="0.9"><stop offset="0" stop-color="#d8d8d8"/><stop offset="0.45" stop-color="#bcbcbc"/><stop offset="1" stop-color="#666"/></linearGradient></defs><circle cx="18.6" cy="18.6" r="16.6" fill="url(#kg7)"/><circle cx="18.25" cy="18.150000000000002" r="15.100000000000001" fill="#bababa"/><line x1="16.30" y1="19.93" x2="6.81" y2="25.41" stroke="#5a5a5a" stroke-width="2"/></svg>
<svg style="left:1388.0px;top:527.6999999999999px;" width="37.2" height="37.2" viewBox="0 0 37.2 37.2"><defs><linearGradient id="kg8" x1="0.15" y1="0.1" x2="0.85" y2="0.9"><stop offset="0" stop-color="#d8d8d8"/><stop offset="0.45" stop-color="#bcbcbc"/><stop offset="1" stop-color="#666"/></linearGradient></defs><circle cx="18.6" cy="18.6" r="16.6" fill="url(#kg8)"/><circle cx="18.25" cy="18.150000000000002" r="15.100000000000001" fill="#bababa"/><line x1="20.90" y1="19.93" x2="30.39" y2="25.41" stroke="#5a5a5a" stroke-width="2"/></svg>
<svg style="left:1434.9px;top:527.6999999999999px;" width="37.2" height="37.2" viewBox="0 0 37.2 37.2"><defs><linearGradient id="kg9" x1="0.15" y1="0.1" x2="0.85" y2="0.9"><stop offset="0" stop-color="#d8d8d8"/><stop offset="0.45" stop-color="#bcbcbc"/><stop offset="1" stop-color="#666"/></linearGradient></defs><circle cx="18.6" cy="18.6" r="16.6" fill="url(#kg9)"/><circle cx="18.25" cy="18.150000000000002" r="15.100000000000001" fill="#bababa"/><line x1="18.60" y1="15.94" x2="18.60" y2="4.99" stroke="#5a5a5a" stroke-width="2"/></svg>
<div style="left:412px;top:584px;width:20px;height:22px;background:transparent;border:1.3px solid #7c7c7e;border-radius:4.5px;box-sizing:border-box;"></div>
<div style="left:417.2px;top:594.15px;width:9.7px;height:1.7px;background:#9e9ea0;"></div>
<div style="left:421.15px;top:589.8px;width:1.7px;height:10.4px;background:#9e9ea0;"></div>
<svg style="left:448.8px;top:583.1999999999999px;" width="18" height="26" viewBox="0 0 18 26"><rect x="7.6" y="0.7" width="2.9" height="12" fill="#b2b2b5"/><polygon points="2.300,10.700 15.800,10.700 9.050,17.400" fill="#b2b2b5"/><circle cx="9.05" cy="20.2" r="2.700" fill="#b2b2b5"/></svg>
<div style="left:484.9px;top:585.9px;width:18.2px;height:18.2px;background:radial-gradient(circle at 58% 41%,#ffffff 0%,#dcffdc 12%,#8cf08c 28%,#3bd83b 48%,#18c018 72%,#10aa10 100%);border-radius:3.5px;border:1px solid #35b835;box-sizing:border-box;box-shadow:0 0 6px 2.5px rgba(18,150,18,0.5);"></div>
<span style="left:555.60px;top:582.40px;font-size:26px;line-height:26px;color:#a8a8a8;font-family:'Liberation Serif',serif;transform:scaleX(1.44);transform-origin:0 0;">S</span>
<span style="left:595.15px;top:585.58px;font-size:20.5px;line-height:20.5px;color:#fff;letter-spacing:0.186px;">Instrument 3</span>
<span style="left:839.07px;top:585.58px;font-size:20.5px;line-height:20.5px;color:#fff;letter-spacing:-0.364px;">1: Plugin Snapshot 1</span>
<svg style="left:1133.5px;top:584.5px;" width="21" height="21" viewBox="0 0 21 21"><path d="M0 0 H20.8 L12.5 10.2 V19.2 a1 1 0 0 1 -1 1 H9.3 a1 1 0 0 1 -1 -1 V10.2 z" fill="#a9a9ad"/></svg>
<div style="left:1178px;top:590.3000000000001px;width:146px;height:6.8px;background:#9c9c9e;border-radius:3.4px"></div>
<div style="left:1185.2px;top:607px;width:1.6px;height:4px;background:#a9a9ad;"></div>
<div style="left:1206.2px;top:607px;width:1.6px;height:4px;background:#a9a9ad;"></div>
<div style="left:1222.2px;top:607px;width:1.6px;height:4px;background:#a9a9ad;"></div>
<div style="left:1237.2px;top:607px;width:1.6px;height:4px;background:#a9a9ad;"></div>
<div style="left:1251.2px;top:607px;width:1.6px;height:4px;background:#a9a9ad;"></div>
<div style="left:1268.2px;top:607px;width:1.6px;height:4px;background:#a9a9ad;"></div>
<div style="left:1289.2px;top:607px;width:1.6px;height:4px;background:#a9a9ad;"></div>
<div style="left:1241.65px;top:584.7px;width:20.2px;height:20.2px;background:#dddddd;border-radius:50%"></div>
<svg style="left:1341.0px;top:576.6999999999999px;" width="37.2" height="37.2" viewBox="0 0 37.2 37.2"><defs><linearGradient id="kg10" x1="0.15" y1="0.1" x2="0.85" y2="0.9"><stop offset="0" stop-color="#d8d8d8"/><stop offset="0.45" stop-color="#bcbcbc"/><stop offset="1" stop-color="#666"/></linearGradient></defs><circle cx="18.6" cy="18.6" r="16.6" fill="url(#kg10)"/><circle cx="18.25" cy="18.150000000000002" r="15.100000000000001" fill="#bababa"/><line x1="16.30" y1="19.93" x2="6.81" y2="25.41" stroke="#5a5a5a" stroke-width="2"/></svg>
<svg style="left:1388.0px;top:576.6999999999999px;" width="37.2" height="37.2" viewBox="0 0 37.2 37.2"><defs><linearGradient id="kg11" x1="0.15" y1="0.1" x2="0.85" y2="0.9"><stop offset="0" stop-color="#d8d8d8"/><stop offset="0.45" stop-color="#bcbcbc"/><stop offset="1" stop-color="#666"/></linearGradient></defs><circle cx="18.6" cy="18.6" r="16.6" fill="url(#kg11)"/><circle cx="18.25" cy="18.150000000000002" r="15.100000000000001" fill="#bababa"/><line x1="20.90" y1="19.93" x2="30.39" y2="25.41" stroke="#5a5a5a" stroke-width="2"/></svg>
<svg style="left:1434.9px;top:576.6999999999999px;" width="37.2" height="37.2" viewBox="0 0 37.2 37.2"><defs><linearGradient id="kg12" x1="0.15" y1="0.1" x2="0.85" y2="0.9"><stop offset="0" stop-color="#d8d8d8"/><stop offset="0.45" stop-color="#bcbcbc"/><stop offset="1" stop-color="#666"/></linearGradient></defs><circle cx="18.6" cy="18.6" r="16.6" fill="url(#kg12)"/><circle cx="18.25" cy="18.150000000000002" r="15.100000000000001" fill="#bababa"/><line x1="18.60" y1="15.94" x2="18.60" y2="4.99" stroke="#5a5a5a" stroke-width="2"/></svg>
<span style="left:597.00px;top:634.58px;font-size:20.5px;line-height:20.5px;color:#fff;letter-spacing:-0.396px;">Add Object</span>
<div style="left:1478.4px;top:291px;width:161.5px;height:21px;background:#000;border:2px solid #424245;border-radius:4px;box-sizing:border-box;"></div>
<div style="left:1517.9px;top:298.14px;width:1.2px;height:7.56px;background:#9c9c9c;"></div>
<div style="left:1546.9px;top:298.14px;width:1.2px;height:7.56px;background:#9c9c9c;"></div>
<div style="left:1574.9px;top:298.14px;width:1.2px;height:7.56px;background:#9c9c9c;"></div>
<div style="left:1598.9px;top:294px;width:1.4px;height:15px;background:#bdbdbd;"></div>
<div style="left:1481.1000000000001px;top:294px;width:30px;height:6.3px;background:#4f4f52;"></div>
<div style="left:1510.7px;top:294px;width:1.1px;height:6.3px;background:#f0694a;"></div>
<div style="left:1481.1000000000001px;top:302.1px;width:1.1px;height:6.9px;background:#f0694a;"></div>
<div style="left:1478.4px;top:438px;width:161.5px;height:21px;background:#000;border:2px solid #424245;border-radius:4px;box-sizing:border-box;"></div>
<div style="left:1517.9px;top:445.14px;width:1.2px;height:7.56px;background:#9c9c9c;"></div>
<div style="left:1546.9px;top:445.14px;width:1.2px;height:7.56px;background:#9c9c9c;"></div>
<div style="left:1574.9px;top:445.14px;width:1.2px;height:7.56px;background:#9c9c9c;"></div>
<div style="left:1598.9px;top:441px;width:1.4px;height:15px;background:#bdbdbd;"></div>
<div style="left:1481.1000000000001px;top:441px;width:1.1px;height:6.9px;background:#f0694a;"></div>
<div style="left:1481.1000000000001px;top:449.1px;width:1.1px;height:6.9px;background:#f0694a;"></div>
<div style="left:1478.4px;top:487px;width:161.5px;height:21px;background:#000;border:2px solid #424245;border-radius:4px;box-sizing:border-box;"></div>
<div style="left:1517.9px;top:494.14px;width:1.2px;height:7.56px;background:#9c9c9c;"></div>
<div style="left:1546.9px;top:494.14px;width:1.2px;height:7.56px;background:#9c9c9c;"></div>
<div style="left:1574.9px;top:494.14px;width:1.2px;height:7.56px;background:#9c9c9c;"></div>
<div style="left:1598.9px;top:490px;width:1.4px;height:15px;background:#bdbdbd;"></div>
<div style="left:1481.1000000000001px;top:490px;width:1.1px;height:6.9px;background:#f0694a;"></div>
<div style="left:1481.1000000000001px;top:498.1px;width:1.1px;height:6.9px;background:#f0694a;"></div>
<div style="left:1478.4px;top:536px;width:161.5px;height:21px;background:#000;border:2px solid #424245;border-radius:4px;box-sizing:border-box;"></div>
<div style="left:1517.9px;top:543.14px;width:1.2px;height:7.56px;background:#9c9c9c;"></div>
<div style="left:1546.9px;top:543.14px;width:1.2px;height:7.56px;background:#9c9c9c;"></div>
<div style="left:1574.9px;top:543.14px;width:1.2px;height:7.56px;background:#9c9c9c;"></div>
<div style="left:1598.9px;top:539px;width:1.4px;height:15px;background:#bdbdbd;"></div>
<div style="left:1481.1000000000001px;top:539px;width:1.1px;height:6.9px;background:#f0694a;"></div>
<div style="left:1481.1000000000001px;top:547.1px;width:1.1px;height:6.9px;background:#f0694a;"></div>
<div style="left:1478.4px;top:585px;width:161.5px;height:21px;background:#000;border:2px solid #424245;border-radius:4px;box-sizing:border-box;"></div>
<div style="left:1517.9px;top:592.14px;width:1.2px;height:7.56px;background:#9c9c9c;"></div>
<div style="left:1546.9px;top:592.14px;width:1.2px;height:7.56px;background:#9c9c9c;"></div>
<div style="left:1574.9px;top:592.14px;width:1.2px;height:7.56px;background:#9c9c9c;"></div>
<div style="left:1598.9px;top:588px;width:1.4px;height:15px;background:#bdbdbd;"></div>
<div style="left:1481.1000000000001px;top:588px;width:1.1px;height:6.9px;background:#f0694a;"></div>
<div style="left:1481.1000000000001px;top:596.1px;width:1.1px;height:6.9px;background:#f0694a;"></div>
<div style="left:1478.4px;top:338.4px;width:161.5px;height:23px;background:#000;border:2px solid #424245;border-radius:4px;box-sizing:border-box;"></div>
<div style="left:1484.7px;top:340.4px;width:1.4px;height:19px;background:#4e4e50;"></div>
<div style="left:1506.8px;top:340.4px;width:1.4px;height:19px;background:#4e4e50;"></div>
<div style="left:1527.8999999999999px;top:340.4px;width:1.4px;height:19px;background:#4e4e50;"></div>
<div style="left:1549.8px;top:340.4px;width:1.4px;height:19px;background:#4e4e50;"></div>
<div style="left:1571.7px;top:340.4px;width:1.4px;height:19px;background:#4e4e50;"></div>
<div style="left:1593.2px;top:340.4px;width:1.4px;height:19px;background:#4e4e50;"></div>
<div style="left:1615.1px;top:340.4px;width:1.4px;height:19px;background:#4e4e50;"></div>
<div style="left:1480.4px;top:352px;width:157.5px;height:6.9px;background:#6b6b6b;"></div>
<div style="left:1648.8999999999999px;top:290.7px;width:20.4px;height:20.4px;background:transparent;border-radius:50%;border:1.2px solid #6e6e71;box-sizing:border-box;"></div>
<div style="left:1650.55px;top:292.34999999999997px;width:17.1px;height:17.1px;background:radial-gradient(circle at 55% 41%,#ffffff 0%,#f4f4f4 10%,#dadada 38%,#c0c0c0 68%,#a6a6a6 100%);border-radius:50%;"></div>
<div style="left:1648.8999999999999px;top:339.7px;width:20.4px;height:20.4px;background:transparent;border-radius:50%;border:1.2px solid #6e6e71;box-sizing:border-box;"></div>
<div style="left:1650.55px;top:341.34999999999997px;width:17.1px;height:17.1px;background:radial-gradient(circle at 55% 41%,#ffffff 0%,#f4f4f4 10%,#dadada 38%,#c0c0c0 68%,#a6a6a6 100%);border-radius:50%;"></div>
<div style="left:1648.8999999999999px;top:437.7px;width:20.4px;height:20.4px;background:transparent;border-radius:50%;border:1.2px solid #6e6e71;box-sizing:border-box;"></div>
<div style="left:1650.55px;top:439.34999999999997px;width:17.1px;height:17.1px;background:radial-gradient(circle at 55% 41%,#ffffff 0%,#f4f4f4 10%,#dadada 38%,#c0c0c0 68%,#a6a6a6 100%);border-radius:50%;"></div>
<div style="left:1648.8999999999999px;top:486.7px;width:20.4px;height:20.4px;background:transparent;border-radius:50%;border:1.2px solid #6e6e71;box-sizing:border-box;"></div>
<div style="left:1650.55px;top:488.34999999999997px;width:17.1px;height:17.1px;background:radial-gradient(circle at 55% 41%,#ffffff 0%,#f4f4f4 10%,#dadada 38%,#c0c0c0 68%,#a6a6a6 100%);border-radius:50%;"></div>
<div style="left:1648.8999999999999px;top:535.6999999999999px;width:20.4px;height:20.4px;background:transparent;border-radius:50%;border:1.2px solid #6e6e71;box-sizing:border-box;"></div>
<div style="left:1650.55px;top:537.35px;width:17.1px;height:17.1px;background:radial-gradient(circle at 55% 41%,#ffffff 0%,#f4f4f4 10%,#dadada 38%,#c0c0c0 68%,#a6a6a6 100%);border-radius:50%;"></div>
<div style="left:1648.8999999999999px;top:584.6999999999999px;width:20.4px;height:20.4px;background:transparent;border-radius:50%;border:1.2px solid #6e6e71;box-sizing:border-box;"></div>
<div style="left:1650.55px;top:586.35px;width:17.1px;height:17.1px;background:radial-gradient(circle at 55% 41%,#ffffff 0%,#f4f4f4 10%,#dadada 38%,#c0c0c0 68%,#a6a6a6 100%);border-radius:50%;"></div>
<div style="left:1680.7px;top:339.7px;width:20.4px;height:20.4px;background:transparent;border-radius:50%;border:1.2px solid #6e6e71;box-sizing:border-box;"></div>
<div style="left:1682.3500000000001px;top:341.34999999999997px;width:17.1px;height:17.1px;background:radial-gradient(circle at 55% 41%,#ffffff 0%,#f4f4f4 10%,#dadada 38%,#c0c0c0 68%,#a6a6a6 100%);border-radius:50%;"></div>
<div style="left:1680.7px;top:486.7px;width:20.4px;height:20.4px;background:transparent;border-radius:50%;border:1.2px solid #6e6e71;box-sizing:border-box;"></div>
<div style="left:1682.3500000000001px;top:488.34999999999997px;width:17.1px;height:17.1px;background:radial-gradient(circle at 55% 41%,#ffffff 0%,#f4f4f4 10%,#dadada 38%,#c0c0c0 68%,#a6a6a6 100%);border-radius:50%;"></div>
<div style="left:1680.7px;top:535.6999999999999px;width:20.4px;height:20.4px;background:transparent;border-radius:50%;border:1.2px solid #6e6e71;box-sizing:border-box;"></div>
<div style="left:1682.3500000000001px;top:537.35px;width:17.1px;height:17.1px;background:radial-gradient(circle at 55% 41%,#ffffff 0%,#f4f4f4 10%,#dadada 38%,#c0c0c0 68%,#a6a6a6 100%);border-radius:50%;"></div>
<div style="left:1680.7px;top:584.6999999999999px;width:20.4px;height:20.4px;background:transparent;border-radius:50%;border:1.2px solid #6e6e71;box-sizing:border-box;"></div>
<div style="left:1682.3500000000001px;top:586.35px;width:17.1px;height:17.1px;background:radial-gradient(circle at 55% 41%,#ffffff 0%,#f4f4f4 10%,#dadada 38%,#c0c0c0 68%,#a6a6a6 100%);border-radius:50%;"></div>
<div style="left:1740.6px;top:303px;width:5.6px;height:2px;background:#fff;"></div>
<div style="left:1740.6px;top:352px;width:5.6px;height:2px;background:#fff;"></div>
<div style="left:1740.6px;top:450px;width:5.6px;height:2px;background:#fff;"></div>
<div style="left:1740.6px;top:499px;width:5.6px;height:2px;background:#fff;"></div>
<div style="left:1740.6px;top:548px;width:5.6px;height:2px;background:#fff;"></div>
<div style="left:1740.6px;top:597px;width:5.6px;height:2px;background:#fff;"></div>
<div style="left:359px;top:956px;width:1644px;height:27.7px;background:#3c3c40;"></div>
<div style="left:364px;top:961px;width:1416px;height:15.5px;background:#6b6b6b;"></div>
<svg style="left:1990px;top:534px;" width="16" height="28" viewBox="0 0 16 28"><path d="M4.7 5 V20.500 L8.6 16.900 L11.3 22.900 L14 21.700 L11.3 15.900 L16.6 15.700 Z" fill="#fff" stroke="#000" stroke-width="1.1" stroke-linejoin="round"/></svg>
<div style="left:0px;top:983.7px;width:2003px;height:167.3px;background:#ffffff;"></div>
<div style="left:15.44999999999997px;top:984px;width:2.1px;height:166px;background:#8a8a8a;"></div>
<div style="left:56.479999999999976px;top:984px;width:2.1px;height:166px;background:#8a8a8a;"></div>
<div style="left:97.50999999999998px;top:984px;width:2.1px;height:166px;background:#8a8a8a;"></div>
<div style="left:138.53999999999996px;top:984px;width:2.1px;height:166px;background:#8a8a8a;"></div>
<div style="left:179.56999999999996px;top:984px;width:2.1px;height:166px;background:#8a8a8a;"></div>
<div style="left:220.59999999999997px;top:984px;width:2.1px;height:166px;background:#8a8a8a;"></div>
<div style="left:261.62999999999994px;top:984px;width:2.1px;height:166px;background:#8a8a8a;"></div>
<div style="left:302.6599999999999px;top:984px;width:2.1px;height:166px;background:#8a8a8a;"></div>
<div style="left:343.6899999999999px;top:984px;width:2.1px;height:166px;background:#8a8a8a;"></div>
<div style="left:384.71999999999986px;top:984px;width:2.1px;height:166px;background:#8a8a8a;"></div>
<div style="left:425.74999999999983px;top:984px;width:2.1px;height:166px;background:#8a8a8a;"></div>
<div style="left:466.7799999999998px;top:984px;width:2.1px;height:166px;background:#8a8a8a;"></div>
<div style="left:507.8099999999998px;top:984px;width:2.1px;height:166px;background:#8a8a8a;"></div>
<div style="left:548.8399999999998px;top:984px;width:2.1px;height:166px;background:#8a8a8a;"></div>
<div style="left:589.8699999999998px;top:984px;width:2.1px;height:166px;background:#8a8a8a;"></div>
<div style="left:630.8999999999997px;top:984px;width:2.1px;height:166px;background:#8a8a8a;"></div>
<div style="left:671.9299999999997px;top:984px;width:2.1px;height:166px;background:#8a8a8a;"></div>
<div style="left:712.9599999999997px;top:984px;width:2.1px;height:166px;background:#8a8a8a;"></div>
<div style="left:753.9899999999997px;top:984px;width:2.1px;height:166px;background:#8a8a8a;"></div>
<div style="left:795.0199999999996px;top:984px;width:2.1px;height:166px;background:#8a8a8a;"></div>
<div style="left:836.0499999999996px;top:984px;width:2.1px;height:166px;background:#8a8a8a;"></div>
<div style="left:877.0799999999996px;top:984px;width:2.1px;height:166px;background:#8a8a8a;"></div>
<div style="left:918.1099999999996px;top:984px;width:2.1px;height:166px;background:#8a8a8a;"></div>
<div style="left:959.1399999999995px;top:984px;width:2.1px;height:166px;background:#8a8a8a;"></div>
<div style="left:1000.1699999999995px;top:984px;width:2.1px;height:166px;background:#8a8a8a;"></div>
<div style="left:1041.1999999999996px;top:984px;width:2.1px;height:166px;background:#8a8a8a;"></div>
<div style="left:1082.2299999999996px;top:984px;width:2.1px;height:166px;background:#8a8a8a;"></div>
<div style="left:1123.2599999999995px;top:984px;width:2.1px;height:166px;background:#8a8a8a;"></div>
<div style="left:1164.2899999999995px;top:984px;width:2.1px;height:166px;background:#8a8a8a;"></div>
<div style="left:1205.3199999999995px;top:984px;width:2.1px;height:166px;background:#8a8a8a;"></div>
<div style="left:1246.3499999999995px;top:984px;width:2.1px;height:166px;background:#8a8a8a;"></div>
<div style="left:1287.3799999999994px;top:984px;width:2.1px;height:166px;background:#8a8a8a;"></div>
<div style="left:1328.4099999999994px;top:984px;width:2.1px;height:166px;background:#8a8a8a;"></div>
<div style="left:1369.4399999999994px;top:984px;width:2.1px;height:166px;background:#8a8a8a;"></div>
<div style="left:1410.4699999999993px;top:984px;width:2.1px;height:166px;background:#8a8a8a;"></div>
<div style="left:1451.4999999999993px;top:984px;width:2.1px;height:166px;background:#8a8a8a;"></div>
<div style="left:1492.5299999999993px;top:984px;width:2.1px;height:166px;background:#8a8a8a;"></div>
<div style="left:1533.5599999999993px;top:984px;width:2.1px;height:166px;background:#8a8a8a;"></div>
<div style="left:1574.5899999999992px;top:984px;width:2.1px;height:166px;background:#8a8a8a;"></div>
<div style="left:1615.6199999999992px;top:984px;width:2.1px;height:166px;background:#8a8a8a;"></div>
<div style="left:1656.6499999999992px;top:984px;width:2.1px;height:166px;background:#8a8a8a;"></div>
<div style="left:1697.6799999999992px;top:984px;width:2.1px;height:166px;background:#8a8a8a;"></div>
<div style="left:1738.7099999999991px;top:984px;width:2.1px;height:166px;background:#8a8a8a;"></div>
<div style="left:1779.739999999999px;top:984px;width:2.1px;height:166px;background:#8a8a8a;"></div>
<div style="left:1820.769999999999px;top:984px;width:2.1px;height:166px;background:#8a8a8a;"></div>
<div style="left:1861.799999999999px;top:984px;width:2.1px;height:166px;background:#8a8a8a;"></div>
<div style="left:1902.829999999999px;top:984px;width:2.1px;height:166px;background:#8a8a8a;"></div>
<div style="left:1943.859999999999px;top:984px;width:2.1px;height:166px;background:#8a8a8a;"></div>
<div style="left:1984.889999999999px;top:984px;width:2.1px;height:166px;background:#8a8a8a;"></div>
<div style="left:0px;top:1149.6px;width:2003px;height:1.6px;background:#8c8c8c;"></div>
<div style="left:45.4px;top:984px;width:23.3px;height:111.8px;background:#000;border-radius:0 0 2px 2px;border:1px solid #565656;border-top:none;box-sizing:border-box;"></div>
<div style="left:86.3px;top:984px;width:23.3px;height:111.8px;background:#000;border-radius:0 0 2px 2px;border:1px solid #565656;border-top:none;box-sizing:border-box;"></div>
<div style="left:168.6px;top:984px;width:23.3px;height:111.8px;background:#000;border-radius:0 0 2px 2px;border:1px solid #565656;border-top:none;box-sizing:border-box;"></div>
<div style="left:209.3px;top:984px;width:23.3px;height:111.8px;background:#000;border-radius:0 0 2px 2px;border:1px solid #565656;border-top:none;box-sizing:border-box;"></div>
<div style="left:250.5px;top:984px;width:23.3px;height:111.8px;background:#000;border-radius:0 0 2px 2px;border:1px solid #565656;border-top:none;box-sizing:border-box;"></div>
<div style="left:332.61px;top:984px;width:23.3px;height:111.8px;background:#000;border-radius:0 0 2px 2px;border:1px solid #565656;border-top:none;box-sizing:border-box;"></div>
<div style="left:373.51000000000005px;top:984px;width:23.3px;height:111.8px;background:#000;border-radius:0 0 2px 2px;border:1px solid #565656;border-top:none;box-sizing:border-box;"></div>
<div style="left:455.81000000000006px;top:984px;width:23.3px;height:111.8px;background:#000;border-radius:0 0 2px 2px;border:1px solid #565656;border-top:none;box-sizing:border-box;"></div>
<div style="left:496.51000000000005px;top:984px;width:23.3px;height:111.8px;background:#000;border-radius:0 0 2px 2px;border:1px solid #565656;border-top:none;box-sizing:border-box;"></div>
<div style="left:537.71px;top:984px;width:23.3px;height:111.8px;background:#000;border-radius:0 0 2px 2px;border:1px solid #565656;border-top:none;box-sizing:border-box;"></div>
<div style="left:619.82px;top:984px;width:23.3px;height:111.8px;background:#000;border-radius:0 0 2px 2px;border:1px solid #565656;border-top:none;box-sizing:border-box;"></div>
<div style="left:660.72px;top:984px;width:23.3px;height:111.8px;background:#000;border-radius:0 0 2px 2px;border:1px solid #565656;border-top:none;box-sizing:border-box;"></div>
<div style="left:743.0200000000001px;top:984px;width:23.3px;height:111.8px;background:#000;border-radius:0 0 2px 2px;border:1px solid #565656;border-top:none;box-sizing:border-box;"></div>
<div style="left:783.72px;top:984px;width:23.3px;height:111.8px;background:#000;border-radius:0 0 2px 2px;border:1px solid #565656;border-top:none;box-sizing:border-box;"></div>
<div style="left:824.9200000000001px;top:984px;width:23.3px;height:111.8px;background:#000;border-radius:0 0 2px 2px;border:1px solid #565656;border-top:none;box-sizing:border-box;"></div>
<div style="left:907.0300000000001px;top:984px;width:23.3px;height:111.8px;background:#000;border-radius:0 0 2px 2px;border:1px solid #565656;border-top:none;box-sizing:border-box;"></div>
<div style="left:947.9300000000001px;top:984px;width:23.3px;height:111.8px;background:#000;border-radius:0 0 2px 2px;border:1px solid #565656;border-top:none;box-sizing:border-box;"></div>
<div style="left:1030.23px;top:984px;width:23.3px;height:111.8px;background:#000;border-radius:0 0 2px 2px;border:1px solid #565656;border-top:none;box-sizing:border-box;"></div>
<div style="left:1070.93px;top:984px;width:23.3px;height:111.8px;background:#000;border-radius:0 0 2px 2px;border:1px solid #565656;border-top:none;box-sizing:border-box;"></div>
<div style="left:1112.13px;top:984px;width:23.3px;height:111.8px;background:#000;border-radius:0 0 2px 2px;border:1px solid #565656;border-top:none;box-sizing:border-box;"></div>
<div style="left:1194.2400000000002px;top:984px;width:23.3px;height:111.8px;background:#000;border-radius:0 0 2px 2px;border:1px solid #565656;border-top:none;box-sizing:border-box;"></div>
<div style="left:1235.14px;top:984px;width:23.3px;height:111.8px;background:#000;border-radius:0 0 2px 2px;border:1px solid #565656;border-top:none;box-sizing:border-box;"></div>
<div style="left:1317.44px;top:984px;width:23.3px;height:111.8px;background:#000;border-radius:0 0 2px 2px;border:1px solid #565656;border-top:none;box-sizing:border-box;"></div>
<div style="left:1358.14px;top:984px;width:23.3px;height:111.8px;background:#000;border-radius:0 0 2px 2px;border:1px solid #565656;border-top:none;box-sizing:border-box;"></div>
<div style="left:1399.3400000000001px;top:984px;width:23.3px;height:111.8px;background:#000;border-radius:0 0 2px 2px;border:1px solid #565656;border-top:none;box-sizing:border-box;"></div>
<div style="left:1481.4500000000003px;top:984px;width:23.3px;height:111.8px;background:#000;border-radius:0 0 2px 2px;border:1px solid #565656;border-top:none;box-sizing:border-box;"></div>
<div style="left:1522.3500000000001px;top:984px;width:23.3px;height:111.8px;background:#000;border-radius:0 0 2px 2px;border:1px solid #565656;border-top:none;box-sizing:border-box;"></div>
<div style="left:1604.65px;top:984px;width:23.3px;height:111.8px;background:#000;border-radius:0 0 2px 2px;border:1px solid #565656;border-top:none;box-sizing:border-box;"></div>
<div style="left:1645.3500000000001px;top:984px;width:23.3px;height:111.8px;background:#000;border-radius:0 0 2px 2px;border:1px solid #565656;border-top:none;box-sizing:border-box;"></div>
<div style="left:1686.5500000000002px;top:984px;width:23.3px;height:111.8px;background:#000;border-radius:0 0 2px 2px;border:1px solid #565656;border-top:none;box-sizing:border-box;"></div>
<div style="left:1768.6600000000003px;top:984px;width:23.3px;height:111.8px;background:#000;border-radius:0 0 2px 2px;border:1px solid #565656;border-top:none;box-sizing:border-box;"></div>
<div style="left:1809.5600000000002px;top:984px;width:23.3px;height:111.8px;background:#000;border-radius:0 0 2px 2px;border:1px solid #565656;border-top:none;box-sizing:border-box;"></div>
<div style="left:1891.8600000000001px;top:984px;width:23.3px;height:111.8px;background:#000;border-radius:0 0 2px 2px;border:1px solid #565656;border-top:none;box-sizing:border-box;"></div>
<div style="left:1932.5600000000002px;top:984px;width:23.3px;height:111.8px;background:#000;border-radius:0 0 2px 2px;border:1px solid #565656;border-top:none;box-sizing:border-box;"></div>
<div style="left:1973.7600000000002px;top:984px;width:23.3px;height:111.8px;background:#000;border-radius:0 0 2px 2px;border:1px solid #565656;border-top:none;box-sizing:border-box;"></div>
<div style="left:0px;top:1151.2px;width:2003px;height:33.3px;background:#1f2a39;"></div>
<div style="left:15.8px;top:1155.5px;width:1.6px;height:25px;background:#7c838d;"></div>
<span style="left:18.64px;top:1162.17px;font-size:16.5px;line-height:16.5px;color:#d4d6d9;">1</span>
<div style="left:303.01px;top:1155.5px;width:1.6px;height:25px;background:#7c838d;"></div>
<span style="left:306.19px;top:1162.17px;font-size:16.5px;line-height:16.5px;color:#d4d6d9;">2</span>
<div style="left:590.22px;top:1155.5px;width:1.6px;height:25px;background:#7c838d;"></div>
<span style="left:593.73px;top:1162.17px;font-size:16.5px;line-height:16.5px;color:#d4d6d9;">3</span>
<div style="left:877.43px;top:1155.5px;width:1.6px;height:25px;background:#7c838d;"></div>
<span style="left:881.10px;top:1162.17px;font-size:16.5px;line-height:16.5px;color:#d4d6d9;">4</span>
<div style="left:1164.6399999999999px;top:1155.5px;width:1.6px;height:25px;background:#7c838d;"></div>
<span style="left:1167.98px;top:1162.17px;font-size:16.5px;line-height:16.5px;color:#d4d6d9;">5</span>
<div style="left:1451.85px;top:1155.5px;width:1.6px;height:25px;background:#7c838d;"></div>
<span style="left:1455.02px;top:1162.17px;font-size:16.5px;line-height:16.5px;color:#d4d6d9;">6</span>
<div style="left:1739.0599999999997px;top:1155.5px;width:1.6px;height:25px;background:#7c838d;"></div>
<span style="left:1742.23px;top:1162.17px;font-size:16.5px;line-height:16.5px;color:#d4d6d9;">7</span>
<div style="left:595px;top:1156.2px;width:279px;height:4.4px;background:#b4b4b4;"></div>
<div style="left:882px;top:1156.2px;width:278.5px;height:4.4px;background:#b4b4b4;"></div>
<div style="left:1874.2px;top:1155px;width:140px;height:30px;background:#0f131a;border-radius:13px 0 0 0;"></div>
<span style="left:1892.41px;top:1160.57px;font-size:19.8px;line-height:19.8px;color:#fff;letter-spacing:-1.005px;">Ch: 1</span>
<div style="left:1979.3px;top:1162.5px;width:16px;height:14.5px;background:radial-gradient(circle at 50% 45%,#ffffff 0%,#dcdcdc 35%,#9c9c9c 80%,#808080 100%);border-radius:3px;"></div>
<div style="left:0px;top:1184.5px;width:2003px;height:2px;background:#3a3a3d;"></div>
<div style="left:0px;top:1186.5px;width:2003px;height:111px;background:#2d2d30;"></div>
<div style="left:5px;top:1221px;width:103.8px;height:71px;background:#38383b;"></div>
<div style="left:120.8px;top:1221px;width:103.89999999999999px;height:71px;background:#38383b;"></div>
<div style="left:236.6px;top:1221px;width:104.20000000000002px;height:71px;background:#38383b;"></div>
<div style="left:352.8px;top:1221px;width:104.0px;height:71px;background:#38383b;"></div>
<div style="left:469px;top:1221px;width:103.79999999999995px;height:71px;background:#38383b;"></div>
<div style="left:585px;top:1221px;width:104px;height:71px;background:#38383b;"></div>
<div style="left:701px;top:1221px;width:53.200000000000045px;height:71px;background:#38383b;"></div>
<div style="left:766px;top:1221px;width:250px;height:71px;background:#38383b;"></div>
<div style="left:1028.2px;top:1221px;width:151.5999999999999px;height:71px;background:#38383b;"></div>
<div style="left:1192.2px;top:1221px;width:314.5999999999999px;height:71px;background:#414144;"></div>
<div style="left:1519.2px;top:1221px;width:315.0999999999999px;height:71px;background:#414144;"></div>
<div style="left:1845.7px;top:1221px;width:152.29999999999995px;height:71px;background:#38383b;"></div>
<span style="left:37.58px;top:1195.19px;font-size:18.6px;line-height:18.6px;color:#cccccc;letter-spacing:-0.233px;">Time</span>
<span style="left:141.12px;top:1195.19px;font-size:18.6px;line-height:18.6px;color:#cccccc;letter-spacing:-0.016px;">Custom</span>
<span style="left:257.02px;top:1195.19px;font-size:18.6px;line-height:18.6px;color:#cccccc;letter-spacing:-0.016px;">Custom</span>
<span style="left:373.12px;top:1195.19px;font-size:18.6px;line-height:18.6px;color:#cccccc;letter-spacing:-0.016px;">Custom</span>
<span style="left:489.22px;top:1195.19px;font-size:18.6px;line-height:18.6px;color:#cccccc;letter-spacing:-0.016px;">Custom</span>
<span style="left:605.32px;top:1195.19px;font-size:18.6px;line-height:18.6px;color:#cccccc;letter-spacing:-0.016px;">Custom</span>
<span style="left:706.80px;top:1195.19px;font-size:18.6px;line-height:18.6px;color:#cccccc;transform:scaleX(0.872);transform-origin:0 0;">CC11</span>
<span style="left:849.43px;top:1195.19px;font-size:18.6px;line-height:18.6px;color:#cccccc;letter-spacing:-0.418px;">Transpose</span>
<span style="left:1054.33px;top:1195.19px;font-size:18.6px;line-height:18.6px;color:#cccccc;letter-spacing:0.167px;">4/4 120bpm</span>
<span style="left:1308.46px;top:1195.19px;font-size:18.6px;line-height:18.6px;color:#cccccc;letter-spacing:-0.390px;">Song - of -</span>
<span style="left:1634.06px;top:1195.19px;font-size:18.6px;line-height:18.6px;color:#cccccc;letter-spacing:-0.114px;">Part 1 of 4</span>
<span style="left:1884.47px;top:1195.19px;font-size:18.6px;line-height:18.6px;color:#cccccc;letter-spacing:0.135px;">Continue</span>
<span style="left:27.40px;top:1242.50px;font-size:30px;line-height:30px;color:#b4b4b8;font-weight:bold;letter-spacing:-0.553px;">7:48</span>
<span style="left:163.45px;top:1242.50px;font-size:30px;line-height:30px;color:#b4b4b8;font-weight:bold;">1</span>
<span style="left:281.05px;top:1242.50px;font-size:30px;line-height:30px;color:#b4b4b8;font-weight:bold;">2</span>
<span style="left:396.70px;top:1242.50px;font-size:30px;line-height:30px;color:#b4b4b8;font-weight:bold;">3</span>
<span style="left:512.35px;top:1242.50px;font-size:30px;line-height:30px;color:#b4b4b8;font-weight:bold;">4</span>
<span style="left:628.50px;top:1242.50px;font-size:30px;line-height:30px;color:#b4b4b8;font-weight:bold;">5</span>
<span style="left:706.60px;top:1242.50px;font-size:30px;line-height:30px;color:#a8a8ac;font-weight:bold;transform:scaleX(0.8);transform-origin:0 0;">C</span>
<div style="left:726.0px;top:1263.1px;width:5px;height:5px;background:#a6a6aa;border-radius:50%"></div>
<div style="left:734.0px;top:1263.1px;width:5px;height:5px;background:#a6a6aa;border-radius:50%"></div>
<div style="left:742.4px;top:1263.1px;width:5px;height:5px;background:#a6a6aa;border-radius:50%"></div>
<div style="left:716px;top:1268.6px;width:30.2px;height:6.3px;background:#9b9b9d;border-radius:3.2px"></div>
<div style="left:706.1px;top:1260.2px;width:20.2px;height:20.2px;background:#dddddd;border-radius:50%"></div>
<div style="left:715.9px;top:1284px;width:2.2px;height:8px;background:#9c9c9f;"></div>
<div style="left:726.8px;top:1284px;width:2.2px;height:8px;background:#9c9c9f;"></div>
<div style="left:738.0px;top:1284px;width:2.2px;height:8px;background:#9c9c9f;"></div>
<div style="left:797.2px;top:1258px;width:8.5px;height:3.9px;background:#b4b4b8;"></div>
<div style="left:887.1px;top:1258px;width:8.3px;height:3.9px;background:#b4b4b8;"></div>
<div style="left:973.2px;top:1255.3px;width:15px;height:4px;background:#b4b4b8;"></div>
<div style="left:978.7px;top:1249.8px;width:4px;height:15px;background:#b4b4b8;"></div>
<svg style="left:1090px;top:1232px;" width="30" height="50" viewBox="0 0 30 50"><rect x="18.6" y="5" width="3.8" height="33" fill="#a9a9ad"/><ellipse cx="13.9" cy="37.6" rx="9" ry="6.3" transform="rotate(-25 13.9 37.6)" fill="#a9a9ad"/></svg>
<svg style="left:1219px;top:1247.8px;" width="17.700000000000045" height="17.5" viewBox="0 0 17.700000000000045 17.5"><polygon points="17.700000000000045,0 0,8.75 17.700000000000045,17.5" fill="#a9a9ad"/></svg>
<svg style="left:1462.3px;top:1247.8px;" width="17.700000000000045" height="17.5" viewBox="0 0 17.700000000000045 17.5"><polygon points="0,0 17.700000000000045,8.75 0,17.5" fill="#a9a9ad"/></svg>
<svg style="left:1545.9px;top:1247.8px;" width="17.799999999999955" height="17.5" viewBox="0 0 17.799999999999955 17.5"><polygon points="17.799999999999955,0 0,8.75 17.799999999999955,17.5" fill="#a9a9ad"/></svg>
<svg style="left:1789.3px;top:1247.8px;" width="17.700000000000045" height="17.5" viewBox="0 0 17.700000000000045 17.5"><polygon points="0,0 17.700000000000045,8.75 0,17.5" fill="#a9a9ad"/></svg>
<span style="left:1627.45px;top:1242.50px;font-size:30px;line-height:30px;color:#b4b4b8;font-weight:bold;letter-spacing:-0.182px;">State 1</span>
<svg style="left:1902.4px;top:1243.6px;" width="22.59999999999991" height="23.700000000000045" viewBox="0 0 22.59999999999991 23.700000000000045"><polygon points="0,0 22.59999999999991,11.850000000000023 0,23.700000000000045" fill="#a9a9ad"/></svg>
<svg style="left:1920.4px;top:1243.6px;" width="23.699999999999818" height="23.700000000000045" viewBox="0 0 23.699999999999818 23.700000000000045"><polygon points="0,0 23.699999999999818,11.850000000000023 0,23.700000000000045" fill="#a9a9ad"/></svg>
<div style="left:0px;top:1288px;width:9px;height:9px;background:radial-gradient(circle at 100% 0%,rgba(0,0,0,0) 0,rgba(0,0,0,0) 7.6px,#c6065f 8.6px,#5b2a70 10.2px);"></div>
<div style="left:1994px;top:1288px;width:9px;height:9px;background:radial-gradient(circle at 0% 0%,rgba(0,0,0,0) 0,rgba(0,0,0,0) 7.6px,#c6065f 8.6px,#c8d0d0 10.2px);"></div>
</div></body></html>
